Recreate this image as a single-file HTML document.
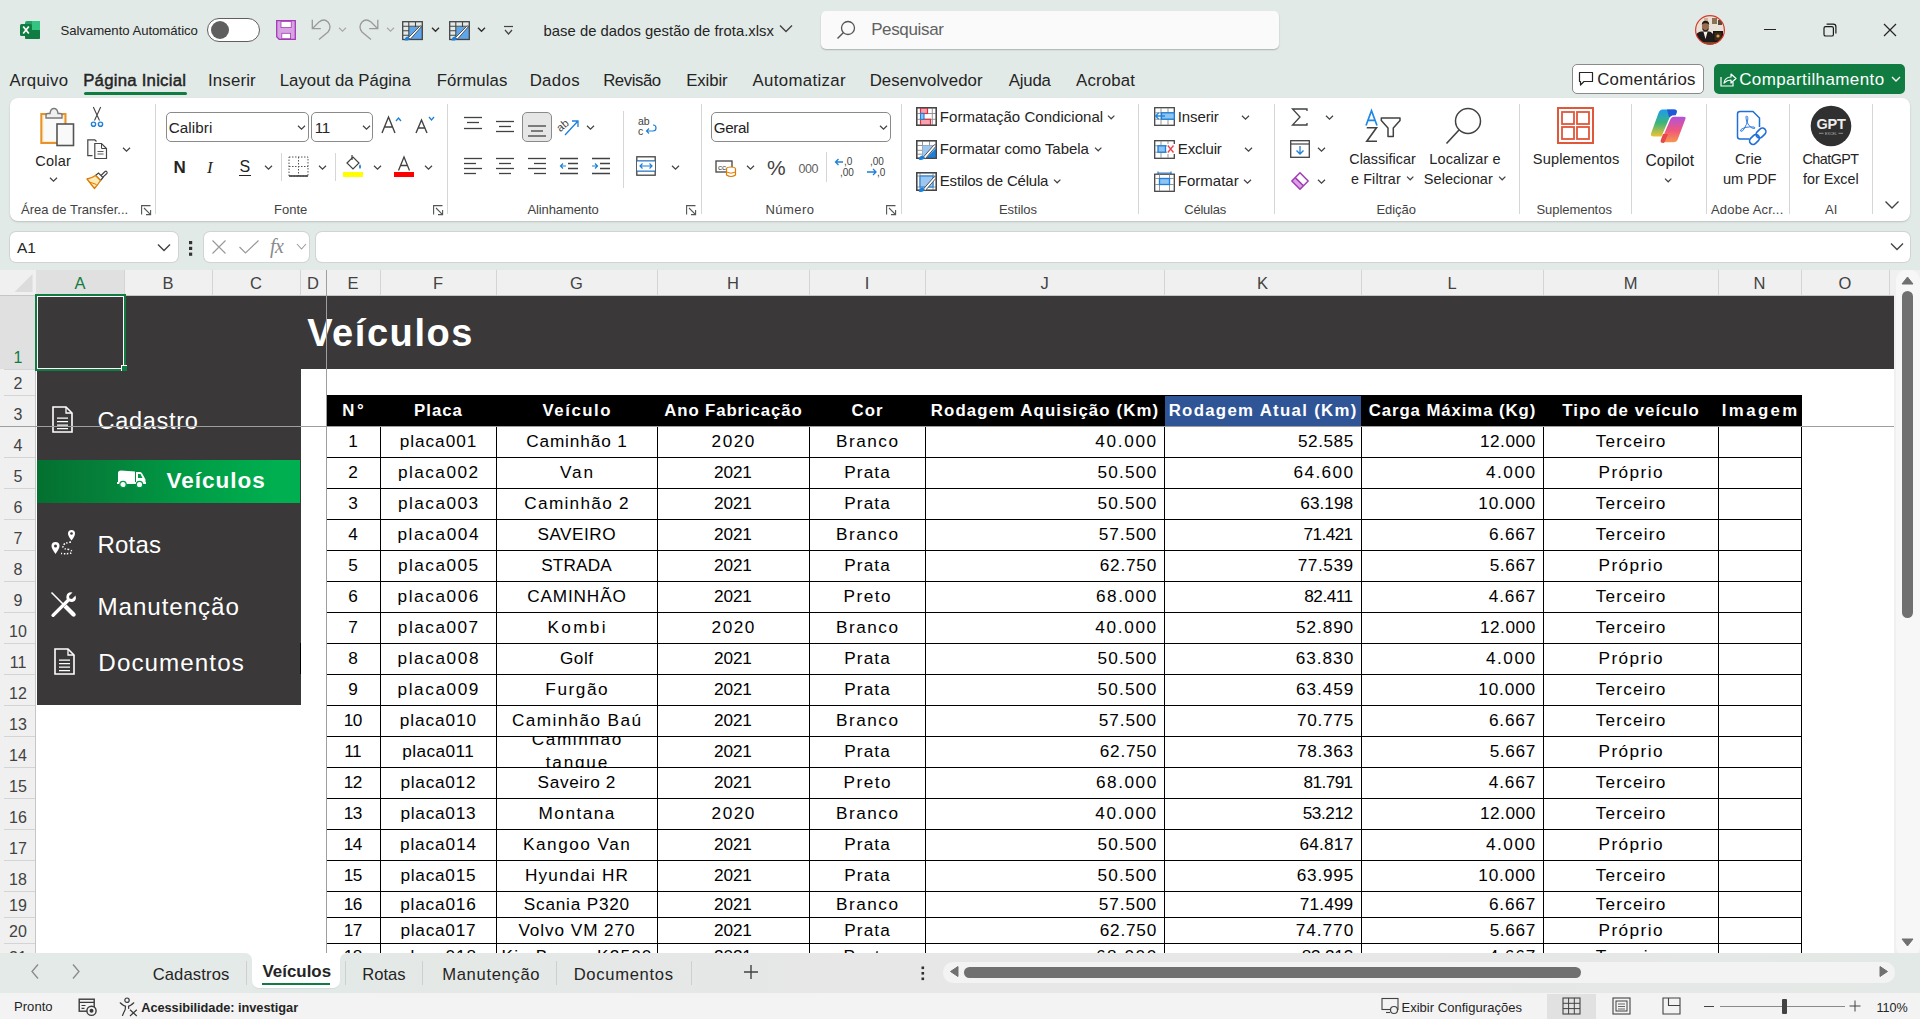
<!DOCTYPE html>
<html><head><meta charset="utf-8"><title>Excel</title>
<style>
html,body{margin:0;padding:0;}
body{width:1920px;height:1019px;position:relative;overflow:hidden;background:#E2EAE7;font-family:"Liberation Sans",sans-serif;}
.t{position:absolute;white-space:nowrap;line-height:1;}
.r{position:absolute;}
svg.r{overflow:visible;}
</style></head><body>
<svg class="r" style="left:20px;top:20px;" width="20" height="20" viewBox="0 0 20 20"><rect x="5" y="1" width="15" height="18" rx="2" fill="#21A366"/><rect x="5" y="10" width="15" height="9" rx="1" fill="#107C41"/><rect x="12" y="1" width="8" height="9" fill="#33C481"/><rect x="0" y="4" width="12" height="12" rx="1.5" fill="#107C41"/><path d="M3.2 6.5 L8.8 13.5 M8.8 6.5 L3.2 13.5" stroke="#fff" stroke-width="1.7"/></svg>
<div class="t" style="top:24.00px;font-size:13.2px;font-weight:400;color:#242424;letter-spacing:-0.052px;left:60.41px;">Salvamento Automático</div>
<div class="r" style="left:207px;top:17.5px;width:53px;height:24px;background:#fff;border:1px solid #5f5f5f;border-radius:12px;box-sizing:border-box;"></div>
<div class="r" style="left:211px;top:21px;width:18px;height:18px;background:#5f5f5f;border-radius:50%;"></div>
<svg class="r" style="left:276px;top:20px;" width="20" height="20" viewBox="0 0 20 20"><path d="M0.7 0.7 H19.3 V19.3 H3.2 L0.7 16.8 Z" fill="#D7A3E2" stroke="#A43AB6" stroke-width="1.3"/><rect x="5" y="1.4" width="10.2" height="6.2" fill="#fff" stroke="#A43AB6" stroke-width="0.8"/><rect x="5.8" y="13.3" width="8.8" height="5.4" fill="#fff" stroke="#A43AB6" stroke-width="0.8"/></svg>
<svg class="r" style="left:311px;top:19px;" width="22" height="22" viewBox="0 0 22 22"><path d="M1.3 0.8 V9.7 H9.8" fill="none" stroke="#9a9a9a" stroke-width="1.3"/><path d="M1.5 9.5 L8 3 Q13 -1 17 3 Q21 8 17 13 L8 20.5" fill="none" stroke="#9a9a9a" stroke-width="1.3"/></svg>
<svg class="r" style="left:337.5px;top:25.5px;" width="9.0" height="7.0" viewBox="0 0 9.0 7.0"><path d="M1 1.75 L4.5 5.25 L8.0 1.75" fill="none" stroke="#a8a8a8" stroke-width="1.1"/></svg>
<svg class="r" style="left:358px;top:19px;" width="22" height="22" viewBox="0 0 22 22"><path d="M19.8 0.8 V9.7 H11.2" fill="none" stroke="#9a9a9a" stroke-width="1.3"/><path d="M19.5 9.5 L13 3 Q8 -1 4 3 Q0 8 4 13 L13 20.5" fill="none" stroke="#9a9a9a" stroke-width="1.3"/></svg>
<svg class="r" style="left:385.5px;top:25.5px;" width="9.0" height="7.0" viewBox="0 0 9.0 7.0"><path d="M1 1.75 L4.5 5.25 L8.0 1.75" fill="none" stroke="#a8a8a8" stroke-width="1.1"/></svg>
<svg class="r" style="left:402px;top:21px;" width="21" height="20" viewBox="0 0 21 20"><rect x="7" y="6" width="13" height="12.5" fill="#5FA5EA"/><rect x="0.7" y="0.7" width="19.6" height="17.8" fill="none" stroke="#454545" stroke-width="1.3"/><path d="M1 5.3 H7 M1 9.8 H7 M1 14.3 H7 M7 5.3 H20 M6.8 1 V18.5 M13.5 1 V6" stroke="#454545" stroke-width="1.1"/><path d="M6 17 L17.5 5.5 Q19 4.5 19.6 5.5 L8.5 18 Z" fill="#fff" stroke="#454545" stroke-width="0.9"/><path d="M2.5 19.5 Q3 15.5 6 15.5 L8 17.5 Q7.5 20 2.5 19.5Z" fill="#1E7FD8"/></svg>
<svg class="r" style="left:430.5px;top:25.5px;" width="9.0" height="7.0" viewBox="0 0 9.0 7.0"><path d="M1 1.75 L4.5 5.25 L8.0 1.75" fill="none" stroke="#303030" stroke-width="1.4"/></svg>
<svg class="r" style="left:449px;top:21px;" width="21" height="20" viewBox="0 0 21 20"><rect x="7" y="6" width="13" height="12.5" fill="#5FA5EA"/><rect x="0.7" y="0.7" width="19.6" height="17.8" fill="none" stroke="#454545" stroke-width="1.3"/><path d="M1 5.3 H7 M1 9.8 H7 M1 14.3 H7 M7 5.3 H20 M6.8 1 V18.5 M13.5 1 V6" stroke="#454545" stroke-width="1.1"/><path d="M6 17 L17.5 5.5 Q19 4.5 19.6 5.5 L8.5 18 Z" fill="#fff" stroke="#454545" stroke-width="0.9"/><path d="M2.5 19.5 Q3 15.5 6 15.5 L8 17.5 Q7.5 20 2.5 19.5Z" fill="#1E7FD8"/></svg>
<svg class="r" style="left:476.5px;top:25.5px;" width="9.0" height="7.0" viewBox="0 0 9.0 7.0"><path d="M1 1.75 L4.5 5.25 L8.0 1.75" fill="none" stroke="#303030" stroke-width="1.4"/></svg>
<svg class="r" style="left:503px;top:25px;" width="11" height="11" viewBox="0 0 11 11"><path d="M1 1.5 H10" stroke="#424242" stroke-width="1.2"/><path d="M2 5 L5.5 9 L9 5" fill="none" stroke="#424242" stroke-width="1.2"/></svg>
<div class="t" style="top:24.00px;font-size:14.8px;font-weight:400;color:#242424;letter-spacing:0.021px;left:543.61px;">base de dados gestão de frota.xlsx</div>
<svg class="r" style="left:779px;top:24px;" width="14" height="9" viewBox="0 0 14 9"><path d="M1 1.5 L7 7.5 L13 1.5" fill="none" stroke="#424242" stroke-width="1.4"/></svg>
<div class="r" style="left:821px;top:11px;width:458px;height:38px;background:#FAFAFA;border-radius:5px;box-shadow:0 1px 1.5px rgba(0,0,0,0.25);"></div>
<svg class="r" style="left:836px;top:20px;" width="20" height="20" viewBox="0 0 20 20"><circle cx="12" cy="8" r="6.5" fill="none" stroke="#555" stroke-width="1.3"/><path d="M7.5 12.5 L1.5 18.5" stroke="#555" stroke-width="1.4"/></svg>
<div class="t" style="top:20.98px;font-size:17px;font-weight:400;color:#616161;letter-spacing:-0.354px;left:871.14px;">Pesquisar</div>
<svg class="r" style="left:1695px;top:15px;" width="30" height="30" viewBox="0 0 30 30"><defs><clipPath id="av"><circle cx="15" cy="15" r="14.5"/></clipPath></defs><g clip-path="url(#av)"><rect width="30" height="30" fill="#E9E2D8"/><rect x="17" y="3" width="5" height="6" fill="#8B7355"/><rect x="23" y="5" width="4" height="5" fill="#5a4a3a"/><rect x="9" y="3" width="4" height="4" fill="#c9b79c"/><path d="M0 30 V21 Q2 17 6 16.5 H14 Q18 17 19 22 V30 Z" fill="#1E1B1A"/><path d="M8.5 17 L10.5 24 L12.5 17 Z" fill="#F4F1EC"/><ellipse cx="10.5" cy="11.5" rx="3.6" ry="4.6" fill="#9A6B4F"/><path d="M6.8 10 Q7 5.8 10.5 5.8 Q14.2 5.8 14.2 10 Q13 8 10.5 8.3 Q8 8 6.8 10Z" fill="#231A15"/><path d="M7.5 13 Q10.5 17.5 13.5 13 L13.5 15 Q10.5 18 7.5 15Z" fill="#2a1f1a"/><rect x="18" y="16" width="10" height="12" fill="#1a1614"/><rect x="19.5" y="17.5" width="7" height="8" fill="#3b2a1a"/><circle cx="23" cy="21" r="1.6" fill="#D9A441"/><rect x="0" y="27" width="30" height="3" fill="#6b4a2a"/></g><circle cx="15" cy="15" r="14.4" fill="none" stroke="#D93A2B" stroke-width="1.2"/></svg>
<div class="r" style="left:1764px;top:29px;width:12px;height:1.2px;background:#242424;"></div>
<svg class="r" style="left:1823px;top:23px;" width="14" height="14" viewBox="0 0 14 14"><rect x="1" y="3.6" width="9.4" height="9.4" rx="1.6" fill="none" stroke="#1a1a1a" stroke-width="1.2"/><path d="M3.6 1.1 H10.3 Q12.9 1.1 12.9 3.7 V10.4" fill="none" stroke="#1a1a1a" stroke-width="1.2"/></svg>
<svg class="r" style="left:1883px;top:23px;" width="14" height="14" viewBox="0 0 14 14"><path d="M1 1 L13 13 M13 1 L1 13" stroke="#242424" stroke-width="1.2"/></svg>
<div class="t" style="top:73.00px;font-size:16.8px;font-weight:400;color:#242424;letter-spacing:0.287px;left:9.50px;">Arquivo</div>
<div class="t" style="top:73.00px;font-size:16.8px;font-weight:400;color:#242424;letter-spacing:0.229px;left:83.16px;-webkit-text-stroke:0.45px #242424;">Página Inicial</div>
<div class="t" style="top:73.00px;font-size:16.8px;font-weight:400;color:#242424;letter-spacing:0.177px;left:207.99px;">Inserir</div>
<div class="t" style="top:73.00px;font-size:16.8px;font-weight:400;color:#242424;letter-spacing:0.031px;left:279.66px;">Layout da Página</div>
<div class="t" style="top:73.00px;font-size:16.8px;font-weight:400;color:#242424;letter-spacing:0.125px;left:436.66px;">Fórmulas</div>
<div class="t" style="top:73.00px;font-size:16.8px;font-weight:400;color:#242424;letter-spacing:0.345px;left:529.66px;">Dados</div>
<div class="t" style="top:73.00px;font-size:16.8px;font-weight:400;color:#242424;letter-spacing:-0.439px;left:603.16px;">Revisão</div>
<div class="t" style="top:73.00px;font-size:16.8px;font-weight:400;color:#242424;letter-spacing:-0.098px;left:686.16px;">Exibir</div>
<div class="t" style="top:73.00px;font-size:16.8px;font-weight:400;color:#242424;letter-spacing:0.354px;left:752.50px;">Automatizar</div>
<div class="t" style="top:73.00px;font-size:16.8px;font-weight:400;color:#242424;letter-spacing:0.08px;left:869.66px;">Desenvolvedor</div>
<div class="t" style="top:73.00px;font-size:16.8px;font-weight:400;color:#242424;letter-spacing:-0.19px;left:1008.75px;">Ajuda</div>
<div class="t" style="top:73.00px;font-size:16.8px;font-weight:400;color:#242424;letter-spacing:0.187px;left:1076.00px;">Acrobat</div>
<div class="r" style="left:84px;top:92px;width:103px;height:3px;background:#107C41;border-radius:2px;"></div>
<div class="r" style="left:1572px;top:64px;width:132px;height:30px;background:#fff;border:1px solid #8a8a8a;border-radius:5px;box-sizing:border-box;"></div>
<svg class="r" style="left:1578px;top:71px;" width="16" height="16" viewBox="0 0 16 16"><path d="M1.5 1.5 H14.5 V10.5 H6 L2.5 14 V10.5 H1.5 Z" fill="none" stroke="#242424" stroke-width="1.2" stroke-linejoin="round"/></svg>
<div class="t" style="top:72.00px;font-size:16.8px;font-weight:400;color:#242424;letter-spacing:0.317px;left:1597.16px;">Comentários</div>
<div class="r" style="left:1714px;top:64px;width:191px;height:30px;background:#107C41;border-radius:5px;"></div>
<svg class="r" style="left:1719px;top:70px;" width="18" height="18" viewBox="0 0 18 18"><path d="M2 7 V16 H14 V12" fill="none" stroke="#fff" stroke-width="1.2"/><path d="M5 13 Q6 7 12 7 V4 L17 8.5 L12 13 V10 Q8 10 5 13Z" fill="none" stroke="#fff" stroke-width="1.2" stroke-linejoin="round"/></svg>
<div class="t" style="top:70.98px;font-size:17px;font-weight:400;color:#fff;letter-spacing:0.409px;left:1739.15px;">Compartilhamento</div>
<svg class="r" style="left:1891px;top:76px;" width="10" height="7" viewBox="0 0 10 7"><path d="M1 1 L5 5 L9 1" fill="none" stroke="#fff" stroke-width="1.3"/></svg>
<div class="r" style="left:10px;top:98px;width:1900px;height:123px;background:#fff;border-radius:8px;box-shadow:0 1px 2px rgba(0,0,0,0.18);"></div>
<svg class="r" style="left:38px;top:106px;" width="38" height="41" viewBox="0 0 38 41"><rect x="3.3" y="8" width="24.2" height="29" fill="#FDEBB8" stroke="#E8912D" stroke-width="2"/><rect x="5.5" y="10" width="20" height="25" fill="#FAFAFA"/><path d="M8 12 V9 Q8 7.5 10 7.5 H12 Q12.5 2.5 16 2.5 Q19.5 2.5 20 7.5 H22 Q24 7.5 24 9 V12 Z" fill="#F0F0F0" stroke="#7a7a7a" stroke-width="1.4"/><rect x="19" y="18" width="16.5" height="21.5" fill="#F9F9F9" stroke="#555" stroke-width="1.6"/></svg>
<div class="t" style="top:154.00px;font-size:14.5px;font-weight:400;color:#242424;letter-spacing:0.247px;left:35.27px;">Colar</div>
<svg class="r" style="left:48.5px;top:175.5px;" width="9.0" height="7.0" viewBox="0 0 9.0 7.0"><path d="M1 1.75 L4.5 5.25 L8.0 1.75" fill="none" stroke="#424242" stroke-width="1.2"/></svg>
<svg class="r" style="left:89px;top:106px;" width="16" height="21" viewBox="0 0 16 21"><path d="M4.3 1 L10.5 14.5 M11.7 1 L5.5 14.5" stroke="#424242" stroke-width="1.1"/><circle cx="4.5" cy="18.2" r="2.1" fill="none" stroke="#1E7FD8" stroke-width="1.4"/><circle cx="11.5" cy="18.2" r="2.1" fill="none" stroke="#1E7FD8" stroke-width="1.4"/></svg>
<svg class="r" style="left:86px;top:138px;" width="22" height="22" viewBox="0 0 22 22"><path d="M6.5 17.7 H1.8 V1.8 H8.8 L10.5 3.5" fill="#FAFAFA" stroke="#454545" stroke-width="1.2"/><path d="M8.8 5.5 H15.5 L20.5 10.5 V20.5 H8.8 Z" fill="#FAFAFA" stroke="#454545" stroke-width="1.2"/><path d="M15.5 5.5 V10.5 H20.5" fill="none" stroke="#454545" stroke-width="1"/><path d="M11.5 13.5 H17.5 M11.5 16 H17.5" stroke="#454545" stroke-width="0.9"/></svg>
<svg class="r" style="left:121.5px;top:145.5px;" width="9.0" height="7.0" viewBox="0 0 9.0 7.0"><path d="M1 1.75 L4.5 5.25 L8.0 1.75" fill="none" stroke="#424242" stroke-width="1.2"/></svg>
<svg class="r" style="left:86px;top:170px;" width="22" height="21" viewBox="0 0 22 21"><path d="M13 7.5 L19 1.5 Q20 0.8 20.8 1.6 L21 2 Q21.5 2.8 20.8 3.5 L14.5 9.5 Z" fill="#fff" stroke="#424242" stroke-width="1.1"/><path d="M9.5 5.5 L12.5 3 L17 7.5 L14.5 10.5 Z" fill="#fff" stroke="#424242" stroke-width="1.2"/><path d="M9.5 5.5 Q5 8.5 1 9 L8.5 18.5 Q12 14.5 14.5 10.5 Z" fill="#FDEBB8" stroke="#E07B00" stroke-width="1.3" stroke-linejoin="round"/><path d="M3.5 12 L10.5 14.5" stroke="#E07B00" stroke-width="1"/></svg>
<div class="t" style="top:203.02px;font-size:13px;font-weight:400;color:#424242;letter-spacing:0.01px;left:21.00px;">Área de Transfer...</div>
<svg class="r" style="left:141px;top:205px;" width="11" height="11" viewBox="0 0 11 11"><path d="M0.6 9.5 V0.6 H9.5" fill="none" stroke="#555" stroke-width="1.1"/><path d="M3 3 L9.6 9.6 M9.6 5 V9.6 H5" fill="none" stroke="#555" stroke-width="1.1"/></svg>
<div class="r" style="left:155px;top:104px;width:1px;height:110px;background:#D6D6D6;"></div>
<div class="r" style="left:166px;top:112px;width:143px;height:30px;background:#fff;border:1px solid #8a8a8a;border-radius:5px;box-sizing:border-box;"></div>
<div class="t" style="top:120.01px;font-size:15.2px;font-weight:400;color:#242424;letter-spacing:0.122px;left:168.64px;">Calibri</div>
<svg class="r" style="left:296.5px;top:123.5px;" width="9.0" height="7.0" viewBox="0 0 9.0 7.0"><path d="M1 1.75 L4.5 5.25 L8.0 1.75" fill="none" stroke="#424242" stroke-width="1.2"/></svg>
<div class="r" style="left:311px;top:112px;width:62px;height:30px;background:#fff;border:1px solid #8a8a8a;border-radius:5px;box-sizing:border-box;"></div>
<div class="t" style="top:120.01px;font-size:15.2px;font-weight:400;color:#242424;letter-spacing:-0.3px;left:314.80px;">11</div>
<svg class="r" style="left:361.5px;top:123.5px;" width="9.0" height="7.0" viewBox="0 0 9.0 7.0"><path d="M1 1.75 L4.5 5.25 L8.0 1.75" fill="none" stroke="#424242" stroke-width="1.2"/></svg>
<svg class="r" style="left:381px;top:115px;" width="22" height="19" viewBox="0 0 22 19"><path d="M1 18 L7.5 2 L14 18 M3.5 12 H11.5" fill="none" stroke="#424242" stroke-width="1.4"/><path d="M15 6 L17.5 3 L20 6" fill="none" stroke="#1E7FD8" stroke-width="1.3"/></svg>
<svg class="r" style="left:415px;top:115px;" width="20" height="19" viewBox="0 0 20 19"><path d="M1 18 L6.5 5 L12 18 M3 13 H10" fill="none" stroke="#424242" stroke-width="1.4"/><path d="M14 2 L16.5 5 L19 2" fill="none" stroke="#1E7FD8" stroke-width="1.3"/></svg>
<div class="t" style="top:158.98px;font-size:17px;font-weight:700;color:#242424;left:173.50px;">N</div>
<div class="t" style="top:158.98px;font-size:17px;font-weight:400;color:#242424;left:207.00px;font-family:'Liberation Serif',serif;font-style:italic;">I</div>
<div class="t" style="top:158.98px;font-size:16px;font-weight:400;color:#242424;left:239.50px;">S</div>
<div class="r" style="left:239px;top:175px;width:12px;height:1.2px;background:#242424;"></div>
<svg class="r" style="left:263.5px;top:163.5px;" width="9.0" height="7.0" viewBox="0 0 9.0 7.0"><path d="M1 1.75 L4.5 5.25 L8.0 1.75" fill="none" stroke="#424242" stroke-width="1.2"/></svg>
<div class="r" style="left:281px;top:153px;width:1px;height:28px;background:#D6D6D6;"></div>
<svg class="r" style="left:288px;top:156px;" width="21" height="21" viewBox="0 0 21 21"><rect x="1" y="1" width="19" height="19" fill="none" stroke="#555" stroke-width="1" stroke-dasharray="1.5 1.5"/><path d="M10.5 1 V20 M1 10.5 H20" stroke="#555" stroke-width="1" stroke-dasharray="1.5 1.5"/><path d="M1 20 H20" stroke="#424242" stroke-width="1.6"/></svg>
<svg class="r" style="left:317.5px;top:163.5px;" width="9.0" height="7.0" viewBox="0 0 9.0 7.0"><path d="M1 1.75 L4.5 5.25 L8.0 1.75" fill="none" stroke="#424242" stroke-width="1.2"/></svg>
<div class="r" style="left:335px;top:153px;width:1px;height:28px;background:#D6D6D6;"></div>
<svg class="r" style="left:343px;top:154px;" width="21" height="18" viewBox="0 0 21 18"><path d="M4 9 L10 3 L16 9 L10 15 Z" fill="#fff" stroke="#424242" stroke-width="1.2"/><path d="M9 1 V6" stroke="#424242" stroke-width="1.2"/><path d="M17 10 Q19 13 17 15 Q15 13 17 10Z" fill="#1E7FD8"/></svg>
<div class="r" style="left:343px;top:172px;width:20px;height:5px;background:#FFFF00;"></div>
<svg class="r" style="left:372.5px;top:163.5px;" width="9.0" height="7.0" viewBox="0 0 9.0 7.0"><path d="M1 1.75 L4.5 5.25 L8.0 1.75" fill="none" stroke="#424242" stroke-width="1.2"/></svg>
<svg class="r" style="left:394px;top:154px;" width="20" height="18" viewBox="0 0 20 18"><path d="M4.5 16.5 L10 3 L15.5 16.5 M6.5 11.5 H13.5" fill="none" stroke="#424242" stroke-width="1.3"/></svg>
<div class="r" style="left:394px;top:172px;width:20px;height:5px;background:#FF0000;"></div>
<svg class="r" style="left:423.5px;top:163.5px;" width="9.0" height="7.0" viewBox="0 0 9.0 7.0"><path d="M1 1.75 L4.5 5.25 L8.0 1.75" fill="none" stroke="#424242" stroke-width="1.2"/></svg>
<div class="t" style="top:203.02px;font-size:13px;font-weight:400;color:#424242;letter-spacing:0.011px;left:273.96px;">Fonte</div>
<svg class="r" style="left:433px;top:205px;" width="11" height="11" viewBox="0 0 11 11"><path d="M0.6 9.5 V0.6 H9.5" fill="none" stroke="#555" stroke-width="1.1"/><path d="M3 3 L9.6 9.6 M9.6 5 V9.6 H5" fill="none" stroke="#555" stroke-width="1.1"/></svg>
<div class="r" style="left:447px;top:104px;width:1px;height:110px;background:#D6D6D6;"></div>
<svg class="r" style="left:463px;top:116px;" width="20" height="18" viewBox="0 0 20 18"><path d="M1 1.5 H19" stroke="#424242" stroke-width="1.3"/><path d="M4 6.5 H16" stroke="#424242" stroke-width="1.3"/><path d="M1 12.5 H19" stroke="#424242" stroke-width="1.3"/></svg>
<svg class="r" style="left:495px;top:119px;" width="20" height="18" viewBox="0 0 20 18"><path d="M1 2.5 H19" stroke="#424242" stroke-width="1.3"/><path d="M4 7.5 H16" stroke="#424242" stroke-width="1.3"/><path d="M1 12.5 H19" stroke="#424242" stroke-width="1.3"/></svg>
<div class="r" style="left:522px;top:112px;width:30px;height:30px;background:#E6E6E6;border:1px solid #8a8a8a;border-radius:5px;box-sizing:border-box;"></div>
<svg class="r" style="left:527px;top:123px;" width="20" height="18" viewBox="0 0 20 18"><path d="M1 3 H19" stroke="#424242" stroke-width="1.3"/><path d="M4 8 H16" stroke="#424242" stroke-width="1.3"/><path d="M1 13 H19" stroke="#424242" stroke-width="1.3"/></svg>
<svg class="r" style="left:557px;top:116px;" width="24" height="21" viewBox="0 0 24 21"><text x="0" y="13" font-family="Liberation Sans" font-size="11" fill="#424242" transform="rotate(-40 6 10)">ab</text><path d="M8 19 L21 5 M15 5 H21 V11" fill="none" stroke="#1E7FD8" stroke-width="1.3"/></svg>
<svg class="r" style="left:585.5px;top:123.5px;" width="9.0" height="7.0" viewBox="0 0 9.0 7.0"><path d="M1 1.75 L4.5 5.25 L8.0 1.75" fill="none" stroke="#424242" stroke-width="1.2"/></svg>
<svg class="r" style="left:463px;top:157px;" width="20" height="18" viewBox="0 0 20 18"><path d="M1 1.5 H19" stroke="#424242" stroke-width="1.3"/><path d="M1 6.5 H13" stroke="#424242" stroke-width="1.3"/><path d="M1 11.5 H19" stroke="#424242" stroke-width="1.3"/><path d="M1 16.5 H13" stroke="#424242" stroke-width="1.3"/></svg>
<svg class="r" style="left:495px;top:157px;" width="20" height="18" viewBox="0 0 20 18"><path d="M1 1.5 H19" stroke="#424242" stroke-width="1.3"/><path d="M4 6.5 H16" stroke="#424242" stroke-width="1.3"/><path d="M1 11.5 H19" stroke="#424242" stroke-width="1.3"/><path d="M4 16.5 H16" stroke="#424242" stroke-width="1.3"/></svg>
<svg class="r" style="left:527px;top:157px;" width="20" height="18" viewBox="0 0 20 18"><path d="M1 1.5 H19" stroke="#424242" stroke-width="1.3"/><path d="M7 6.5 H19" stroke="#424242" stroke-width="1.3"/><path d="M1 11.5 H19" stroke="#424242" stroke-width="1.3"/><path d="M7 16.5 H19" stroke="#424242" stroke-width="1.3"/></svg>
<svg class="r" style="left:559px;top:157px;" width="20" height="18" viewBox="0 0 20 18"><path d="M1 1.5 H19 M9 6.5 H19 M9 11.5 H19 M1 16.5 H19" stroke="#424242" stroke-width="1.3"/><path d="M7 9 H1.5 M4 6.5 L1.5 9 L4 11.5" fill="none" stroke="#1E7FD8" stroke-width="1.2"/></svg>
<svg class="r" style="left:591px;top:157px;" width="20" height="18" viewBox="0 0 20 18"><path d="M1 1.5 H19 M9 6.5 H19 M9 11.5 H19 M1 16.5 H19" stroke="#424242" stroke-width="1.3"/><path d="M1 9 H6.5 M4 6.5 L6.5 9 L4 11.5" fill="none" stroke="#1E7FD8" stroke-width="1.2"/></svg>
<div class="r" style="left:623px;top:111px;width:1px;height:77px;background:#D6D6D6;"></div>
<svg class="r" style="left:637px;top:116px;" width="21" height="22" viewBox="0 0 21 22"><text x="1" y="9" font-family="Liberation Sans" font-size="10.5" fill="#424242">ab</text><text x="1" y="19" font-family="Liberation Sans" font-size="10.5" fill="#424242">c</text><path d="M10 15 H16 Q19 15 19 12 Q19 9 16 9 M12 12.5 L9.5 15 L12 17.5" fill="none" stroke="#1E7FD8" stroke-width="1.2"/></svg>
<svg class="r" style="left:636px;top:156px;" width="20" height="20" viewBox="0 0 20 20"><rect x="0.8" y="0.8" width="18.4" height="18.4" fill="none" stroke="#424242" stroke-width="1.3"/><path d="M1 5 H19 M1 15 H19" stroke="#424242" stroke-width="1"/><rect x="1" y="5" width="18" height="10" fill="#fff"/><path d="M1 5 H19 M1 15 H19" stroke="#1E7FD8" stroke-width="1.2"/><path d="M4 10 H16 M6.5 7.5 L4 10 L6.5 12.5 M13.5 7.5 L16 10 L13.5 12.5" fill="none" stroke="#1E7FD8" stroke-width="1.2"/></svg>
<svg class="r" style="left:670.5px;top:163.5px;" width="9.0" height="7.0" viewBox="0 0 9.0 7.0"><path d="M1 1.75 L4.5 5.25 L8.0 1.75" fill="none" stroke="#424242" stroke-width="1.2"/></svg>
<div class="t" style="top:203.02px;font-size:13px;font-weight:400;color:#424242;letter-spacing:-0.116px;left:527.50px;">Alinhamento</div>
<svg class="r" style="left:686px;top:205px;" width="11" height="11" viewBox="0 0 11 11"><path d="M0.6 9.5 V0.6 H9.5" fill="none" stroke="#555" stroke-width="1.1"/><path d="M3 3 L9.6 9.6 M9.6 5 V9.6 H5" fill="none" stroke="#555" stroke-width="1.1"/></svg>
<div class="r" style="left:701px;top:104px;width:1px;height:110px;background:#D6D6D6;"></div>
<div class="r" style="left:711px;top:112px;width:180px;height:30px;background:#fff;border:1px solid #8a8a8a;border-radius:5px;box-sizing:border-box;"></div>
<div class="t" style="top:120.01px;font-size:15.2px;font-weight:400;color:#242424;letter-spacing:-0.373px;left:713.74px;">Geral</div>
<svg class="r" style="left:878.5px;top:123.5px;" width="9.0" height="7.0" viewBox="0 0 9.0 7.0"><path d="M1 1.75 L4.5 5.25 L8.0 1.75" fill="none" stroke="#424242" stroke-width="1.2"/></svg>
<svg class="r" style="left:715px;top:159px;" width="22" height="19" viewBox="0 0 22 19"><rect x="1" y="2" width="16" height="11" fill="none" stroke="#424242" stroke-width="1.3"/><text x="3" y="11" font-family="Liberation Sans" font-size="8" fill="#424242">cc</text><ellipse cx="16" cy="10" rx="4.5" ry="2" fill="#fff" stroke="#E07B00" stroke-width="1.2"/><path d="M11.5 10 V16 Q16 19 20.5 16 V10" fill="#fff" stroke="#E07B00" stroke-width="1.2"/><path d="M11.5 13 Q16 15.5 20.5 13" fill="none" stroke="#E07B00" stroke-width="1"/></svg>
<svg class="r" style="left:745.5px;top:163.5px;" width="9.0" height="7.0" viewBox="0 0 9.0 7.0"><path d="M1 1.75 L4.5 5.25 L8.0 1.75" fill="none" stroke="#424242" stroke-width="1.2"/></svg>
<div class="t" style="top:157.00px;font-size:21px;font-weight:400;color:#424242;left:767.00px;">%</div>
<div class="t" style="top:162.99px;font-size:12.5px;font-weight:400;color:#616161;letter-spacing:-0.5px;left:798.50px;">000</div>
<div class="r" style="left:826px;top:152px;width:1px;height:30px;background:#D6D6D6;"></div>
<svg class="r" style="left:834px;top:156px;" width="20" height="21" viewBox="0 0 20 21"><path d="M9 6 H1.5 M4.5 3 L1.5 6 L4.5 9" fill="none" stroke="#1E7FD8" stroke-width="1.3"/><text x="10" y="9" font-family="Liberation Sans" font-size="10" fill="#424242">,0</text><text x="6" y="20" font-family="Liberation Sans" font-size="10" fill="#424242">,00</text></svg>
<svg class="r" style="left:866px;top:156px;" width="20" height="21" viewBox="0 0 20 21"><text x="4" y="9" font-family="Liberation Sans" font-size="10" fill="#424242">,00</text><path d="M1 16 H10 M7 13 L10 16 L7 19" fill="none" stroke="#1E7FD8" stroke-width="1.3"/><text x="11" y="20" font-family="Liberation Sans" font-size="10" fill="#424242">,0</text></svg>
<div class="t" style="top:203.02px;font-size:13px;font-weight:400;color:#424242;letter-spacing:0.469px;left:765.46px;">Número</div>
<svg class="r" style="left:886px;top:205px;" width="11" height="11" viewBox="0 0 11 11"><path d="M0.6 9.5 V0.6 H9.5" fill="none" stroke="#555" stroke-width="1.1"/><path d="M3 3 L9.6 9.6 M9.6 5 V9.6 H5" fill="none" stroke="#555" stroke-width="1.1"/></svg>
<div class="r" style="left:901px;top:104px;width:1px;height:110px;background:#D6D6D6;"></div>
<svg class="r" style="left:916px;top:107px;" width="21" height="19" viewBox="0 0 21 19"><rect x="0.7" y="0.7" width="19.6" height="17.6" fill="#fff" stroke="#454545" stroke-width="1.3"/><path d="M1 6.5 H20 M1 12.3 H20 M4.5 1 V18 M16.3 1 V18" stroke="#8a8a8a" stroke-width="0.9"/><rect x="4.5" y="1" width="7" height="5.5" fill="#F5A3AE" stroke="#E0313F" stroke-width="1.2"/><rect x="4.5" y="12.3" width="10" height="5.7" fill="#F5A3AE" stroke="#E0313F" stroke-width="1.2"/><rect x="4.5" y="6.5" width="3.5" height="5.8" fill="#8EC3F2" stroke="#1E7FD8" stroke-width="1.1"/><rect x="0.7" y="0.7" width="19.6" height="17.6" fill="none" stroke="#454545" stroke-width="1.3"/></svg>
<div class="t" style="top:108.98px;font-size:15px;font-weight:400;color:#242424;letter-spacing:0.037px;left:939.80px;">Formatação Condicional</div>
<svg class="r" style="left:1106.8px;top:113.8px;" width="8.4" height="6.4" viewBox="0 0 8.4 6.4"><path d="M1 1.6 L4.2 4.800000000000001 L7.4 1.6" fill="none" stroke="#424242" stroke-width="1.2"/></svg>
<svg class="r" style="left:916px;top:140px;" width="21" height="20" viewBox="0 0 21 20"><rect x="0.7" y="0.7" width="19.6" height="17.6" fill="#fff" stroke="#454545" stroke-width="1.3"/><path d="M1 5.5 H20 M1 10.3 H6 M1 14.2 H6 M6.5 1 V18 M13.5 1 V6" stroke="#8a8a8a" stroke-width="0.9"/><rect x="6.5" y="5.5" width="13.8" height="12.8" fill="#9DC6F0"/><path d="M20.3 8 V18.3 H10 Z" fill="#1E7FD8"/><rect x="0.7" y="0.7" width="19.6" height="17.6" fill="none" stroke="#454545" stroke-width="1.3"/><path d="M7 17.5 L17.8 5.2 Q19 4.2 19.8 5 Q20.4 5.8 19.5 6.8 L9.2 18.8 Z" fill="#fff" stroke="#454545" stroke-width="0.9"/><path d="M2.8 19.8 Q3 15.8 6.5 15.5 L8.8 17.5 Q8 20.5 2.8 19.8Z" fill="#1E7FD8"/></svg>
<div class="t" style="top:140.98px;font-size:15px;font-weight:400;color:#242424;letter-spacing:-0.034px;left:939.80px;">Formatar como Tabela</div>
<svg class="r" style="left:1093.8px;top:145.8px;" width="8.4" height="6.4" viewBox="0 0 8.4 6.4"><path d="M1 1.6 L4.2 4.800000000000001 L7.4 1.6" fill="none" stroke="#424242" stroke-width="1.2"/></svg>
<svg class="r" style="left:916px;top:172px;" width="21" height="20" viewBox="0 0 21 20"><rect x="0.7" y="0.7" width="19.6" height="17.6" fill="#fff" stroke="#454545" stroke-width="1.3"/><path d="M1 4 H20 M1 15 H20 M4 1 V18 M17 1 V18" stroke="#8a8a8a" stroke-width="0.9"/><rect x="4" y="4" width="13" height="11" fill="#9DC6F0" stroke="#1E7FD8" stroke-width="1.1"/><rect x="0.7" y="0.7" width="19.6" height="17.6" fill="none" stroke="#454545" stroke-width="1.3"/><path d="M7 17.5 L17.8 5.2 Q19 4.2 19.8 5 Q20.4 5.8 19.5 6.8 L9.2 18.8 Z" fill="#fff" stroke="#454545" stroke-width="0.9"/><path d="M2.8 19.8 Q3 15.8 6.5 15.5 L8.8 17.5 Q8 20.5 2.8 19.8Z" fill="#1E7FD8"/></svg>
<div class="t" style="top:172.98px;font-size:15px;font-weight:400;color:#242424;letter-spacing:-0.191px;left:939.80px;">Estilos de Célula</div>
<svg class="r" style="left:1052.8px;top:177.8px;" width="8.4" height="6.4" viewBox="0 0 8.4 6.4"><path d="M1 1.6 L4.2 4.800000000000001 L7.4 1.6" fill="none" stroke="#424242" stroke-width="1.2"/></svg>
<div class="t" style="top:203.02px;font-size:13px;font-weight:400;color:#424242;letter-spacing:-0.032px;left:998.96px;">Estilos</div>
<div class="r" style="left:1138px;top:104px;width:1px;height:110px;background:#D6D6D6;"></div>
<svg class="r" style="left:1154px;top:107px;" width="21" height="19" viewBox="0 0 21 19"><rect x="0.7" y="0.7" width="19.6" height="17.6" fill="#fff" stroke="#454545" stroke-width="1.3"/><path d="M1 5.8 H20 M1 12.2 H20 M7 1 V18 M14 1 V18" stroke="#8a8a8a" stroke-width="0.9"/><rect x="7.5" y="5.8" width="12.8" height="6.4" fill="#8EC3F2" stroke="#1E7FD8" stroke-width="1.3"/><path d="M11 9 H1.5 M4.8 5.7 L1.5 9 L4.8 12.3" fill="none" stroke="#1E88E5" stroke-width="1.3"/></svg>
<div class="t" style="top:108.98px;font-size:15px;font-weight:400;color:#242424;letter-spacing:-0.087px;left:1177.65px;">Inserir</div>
<svg class="r" style="left:1240.5px;top:113.5px;" width="9.0" height="7.0" viewBox="0 0 9.0 7.0"><path d="M1 1.75 L4.5 5.25 L8.0 1.75" fill="none" stroke="#424242" stroke-width="1.2"/></svg>
<svg class="r" style="left:1154px;top:140px;" width="21" height="19" viewBox="0 0 21 19"><rect x="0.7" y="0.7" width="19.6" height="17.6" fill="#fff" stroke="#454545" stroke-width="1.3"/><path d="M1 5.8 H20 M1 12.2 H20 M7 1 V18 M14 1 V18" stroke="#8a8a8a" stroke-width="0.9"/><rect x="4" y="5.8" width="7.5" height="6.4" fill="#8EC3F2" stroke="#1E7FD8" stroke-width="1.3"/><rect x="13" y="4" width="8" height="10" fill="#fff"/><path d="M13.8 5.5 L19.5 12.5 M19.5 5.5 L13.8 12.5" stroke="#E8434F" stroke-width="1.3"/></svg>
<div class="t" style="top:140.98px;font-size:15px;font-weight:400;color:#242424;letter-spacing:-0.158px;left:1177.80px;">Excluir</div>
<svg class="r" style="left:1243.5px;top:145.5px;" width="9.0" height="7.0" viewBox="0 0 9.0 7.0"><path d="M1 1.75 L4.5 5.25 L8.0 1.75" fill="none" stroke="#424242" stroke-width="1.2"/></svg>
<svg class="r" style="left:1154px;top:171px;" width="21" height="21" viewBox="0 0 21 21"><path d="M4 2 H17 M4 0.5 V3.5 M17 0.5 V3.5" stroke="#1E88E5" stroke-width="1.2"/><rect x="0.7" y="3.2" width="19.6" height="17.1" fill="#fff" stroke="#454545" stroke-width="1.3"/><path d="M1 7.5 H20 M1 13.5 H20 M5.5 3.5 V20 M15.5 3.5 V20" stroke="#8a8a8a" stroke-width="0.9"/><rect x="5.5" y="7.5" width="10" height="6" fill="#8EC3F2" stroke="#1E7FD8" stroke-width="1.3"/></svg>
<div class="t" style="top:172.98px;font-size:15px;font-weight:400;color:#242424;letter-spacing:0.004px;left:1177.80px;">Formatar</div>
<svg class="r" style="left:1242.5px;top:177.5px;" width="9.0" height="7.0" viewBox="0 0 9.0 7.0"><path d="M1 1.75 L4.5 5.25 L8.0 1.75" fill="none" stroke="#424242" stroke-width="1.2"/></svg>
<div class="t" style="top:203.02px;font-size:13px;font-weight:400;color:#424242;letter-spacing:-0.242px;left:1184.35px;">Células</div>
<div class="r" style="left:1274px;top:104px;width:1px;height:110px;background:#D6D6D6;"></div>
<svg class="r" style="left:1291px;top:108px;" width="18" height="18" viewBox="0 0 18 18"><path d="M16 3 V1 H1.5 L9 9 L1.5 17 H16 V15" fill="none" stroke="#424242" stroke-width="1.3"/></svg>
<svg class="r" style="left:1324.5px;top:113.5px;" width="9.0" height="7.0" viewBox="0 0 9.0 7.0"><path d="M1 1.75 L4.5 5.25 L8.0 1.75" fill="none" stroke="#424242" stroke-width="1.2"/></svg>
<svg class="r" style="left:1290px;top:140px;" width="20" height="18" viewBox="0 0 20 18"><rect x="0.7" y="0.7" width="18.6" height="16.6" fill="none" stroke="#424242" stroke-width="1.3"/><path d="M1 4 H19" stroke="#424242" stroke-width="1.2"/><path d="M10 6 V14 M6.5 10.5 L10 14 L13.5 10.5" fill="none" stroke="#1E7FD8" stroke-width="1.3"/></svg>
<svg class="r" style="left:1316.5px;top:145.5px;" width="9.0" height="7.0" viewBox="0 0 9.0 7.0"><path d="M1 1.75 L4.5 5.25 L8.0 1.75" fill="none" stroke="#424242" stroke-width="1.2"/></svg>
<svg class="r" style="left:1290px;top:171px;" width="20" height="20" viewBox="0 0 20 20"><path d="M1.8 10 L5.2 6.6 L13.4 14.8 L10 18.2 Z" fill="#D9A3E6"/><path d="M10 1.8 L18.2 10 L10 18.2 L1.8 10 Z M5.2 6.6 L13.4 14.8" fill="none" stroke="#A43AB6" stroke-width="1.5" stroke-linejoin="round"/></svg>
<svg class="r" style="left:1316.5px;top:177.5px;" width="9.0" height="7.0" viewBox="0 0 9.0 7.0"><path d="M1 1.75 L4.5 5.25 L8.0 1.75" fill="none" stroke="#424242" stroke-width="1.2"/></svg>
<svg class="r" style="left:1364px;top:108px;" width="38" height="36" viewBox="0 0 38 36"><path d="M2 17.5 L7.5 2.8 L13 17.5 M4.2 12.3 H10.8" fill="none" stroke="#1E88E5" stroke-width="1.7"/><path d="M2.8 19.8 H12.5 L2.8 33.3 H13" fill="none" stroke="#424242" stroke-width="1.6"/><path d="M17.3 10 H36 V12.5 L29.3 20 V28.5 H24 V20 L17.3 12.5 Z" fill="none" stroke="#424242" stroke-width="1.5" stroke-linejoin="round"/></svg>
<div class="t" style="top:152.02px;font-size:14.3px;font-weight:400;color:#242424;letter-spacing:0.044px;left:1349.29px;">Classificar</div>
<div class="t" style="top:172.02px;font-size:14.3px;font-weight:400;color:#242424;letter-spacing:0.164px;left:1350.93px;">e Filtrar</div>
<svg class="r" style="left:1405.8px;top:174.8px;" width="8.4" height="6.4" viewBox="0 0 8.4 6.4"><path d="M1 1.6 L4.2 4.800000000000001 L7.4 1.6" fill="none" stroke="#424242" stroke-width="1.2"/></svg>
<svg class="r" style="left:1445px;top:107px;" width="38" height="38" viewBox="0 0 38 38"><circle cx="23" cy="14" r="12.5" fill="none" stroke="#424242" stroke-width="1.5"/><path d="M14 23 L1.5 36.5" stroke="#424242" stroke-width="1.6"/></svg>
<div class="t" style="top:152.00px;font-size:14.5px;font-weight:400;color:#242424;letter-spacing:0.113px;left:1429.34px;">Localizar e</div>
<div class="t" style="top:172.00px;font-size:14.5px;font-weight:400;color:#242424;letter-spacing:0.04px;left:1423.85px;">Selecionar</div>
<svg class="r" style="left:1497.8px;top:174.8px;" width="8.4" height="6.4" viewBox="0 0 8.4 6.4"><path d="M1 1.6 L4.2 4.800000000000001 L7.4 1.6" fill="none" stroke="#424242" stroke-width="1.2"/></svg>
<div class="t" style="top:203.02px;font-size:13px;font-weight:400;color:#424242;letter-spacing:-0.051px;left:1376.46px;">Edição</div>
<div class="r" style="left:1519px;top:104px;width:1px;height:110px;background:#D6D6D6;"></div>
<svg class="r" style="left:1557px;top:107px;" width="37" height="37" viewBox="0 0 37 37"><rect x="1" y="1" width="35" height="35" fill="none" stroke="#E0573A" stroke-width="2"/><rect x="5" y="5" width="12" height="12" fill="none" stroke="#E0573A" stroke-width="1.8"/><rect x="20" y="5" width="12" height="12" fill="none" stroke="#E0573A" stroke-width="1.8"/><rect x="5" y="20" width="12" height="12" fill="none" stroke="#E0573A" stroke-width="1.8"/><rect x="20" y="20" width="12" height="12" fill="none" stroke="#E0573A" stroke-width="1.8"/></svg>
<div class="t" style="top:152.02px;font-size:14.6px;font-weight:400;color:#242424;letter-spacing:0.118px;left:1532.84px;">Suplementos</div>
<div class="t" style="top:203.02px;font-size:13px;font-weight:400;color:#424242;letter-spacing:-0.041px;left:1536.41px;">Suplementos</div>
<div class="r" style="left:1631px;top:104px;width:1px;height:110px;background:#D6D6D6;"></div>
<svg class="r" style="left:1650px;top:109px;" width="38" height="35" viewBox="0 0 38 35"><defs><linearGradient id="cg1" x1="0" y1="0" x2="0" y2="1"><stop offset="0" stop-color="#1A9CF0"/><stop offset="0.5" stop-color="#3DB57A"/><stop offset="1" stop-color="#F2C230"/></linearGradient><linearGradient id="cg2" x1="0" y1="0" x2="0" y2="1"><stop offset="0" stop-color="#B050E0"/><stop offset="0.55" stop-color="#F0587A"/><stop offset="1" stop-color="#F89B4A"/></linearGradient></defs><path d="M11 0.5 H24 Q28 0.5 26.5 4 L18 24 Q16.5 27.5 12.5 27.5 H4 Q0 27.5 1.2 24 L8.5 4 Q9.8 0.5 12.5 0.5 Z" fill="url(#cg1)"/><path d="M17 0.5 H24 Q28 0.5 26.5 4 L25 8 H19 Z" fill="#2456D8"/><path d="M25 7 H33 Q37.5 7 36 10.5 L28.5 30.5 Q27.2 34 23.5 34 H13.5 Q9.5 34 11 30.5 L19.5 10.5 Q20.8 7 24 7 Z" fill="url(#cg2)" stroke="#fff" stroke-width="1.5"/><path d="M11 30.5 L13 25 H18 L16 30 Q14.5 34 13.5 34 Q9.5 34 11 30.5Z" fill="#E8484A"/></svg>
<div class="t" style="top:153.02px;font-size:15.6px;font-weight:400;color:#242424;left:1645.50px;">Copilot</div>
<svg class="r" style="left:1663.8px;top:176.8px;" width="8.4" height="6.4" viewBox="0 0 8.4 6.4"><path d="M1 1.6 L4.2 4.800000000000001 L7.4 1.6" fill="none" stroke="#424242" stroke-width="1.2"/></svg>
<div class="r" style="left:1706px;top:104px;width:1px;height:110px;background:#D6D6D6;"></div>
<svg class="r" style="left:1735px;top:110px;" width="34" height="37" viewBox="0 0 34 37"><path d="M14.5 29 H5 Q2.5 29 2.5 26.5 V4 Q2.5 1.5 5 1.5 H18 L24.5 8 V17" fill="none" stroke="#1E6FD8" stroke-width="1.5" stroke-linejoin="round"/><path d="M11.5 6 Q13.5 6 12.5 11 Q12 14 9 19 Q7 22.5 5.5 21 Q5 19 10 17.5 Q15 16.5 19 17 Q20.5 17.5 19.5 18.5 Q17 19 14 15.5 Q11 12 11 8 Q11 6 11.5 6Z" fill="none" stroke="#1E6FD8" stroke-width="0.9"/><rect x="16" y="24" width="7" height="11" rx="3.5" transform="rotate(45 19.5 29.5)" fill="#fff" stroke="#1E6FD8" stroke-width="1.6"/><rect x="22.5" y="17.5" width="7" height="11" rx="3.5" transform="rotate(45 26 23)" fill="none" stroke="#1E6FD8" stroke-width="1.6"/></svg>
<div class="t" style="top:152.02px;font-size:14.6px;font-weight:400;color:#242424;left:1735.00px;">Crie</div>
<div class="t" style="top:172.02px;font-size:14.6px;font-weight:400;color:#242424;left:1723.00px;">um PDF</div>
<div class="t" style="top:203.02px;font-size:13px;font-weight:400;color:#424242;letter-spacing:0.194px;left:1711.00px;">Adobe Acr...</div>
<div class="r" style="left:1789px;top:104px;width:1px;height:110px;background:#D6D6D6;"></div>
<svg class="r" style="left:1810px;top:105px;" width="42" height="42" viewBox="0 0 42 42"><circle cx="21" cy="21" r="20.3" fill="#303030"/><text x="21" y="23.5" text-anchor="middle" font-family="Liberation Sans" font-weight="700" font-size="14.5" letter-spacing="-0.3" fill="#EDEDED">GPT</text><text x="21" y="29.5" text-anchor="middle" font-family="Liberation Sans" font-size="3.6" fill="#bbb">EXCEL</text><path d="M9 28.3 H13.5 M28.5 28.3 H33" stroke="#bbb" stroke-width="0.7"/></svg>
<div class="t" style="top:152.02px;font-size:14.3px;font-weight:400;color:#242424;letter-spacing:-0.5px;left:1802.50px;">ChatGPT</div>
<div class="t" style="top:172.02px;font-size:14.3px;font-weight:400;color:#242424;left:1803.00px;">for Excel</div>
<div class="t" style="top:203.02px;font-size:13px;font-weight:400;color:#424242;left:1825.00px;">AI</div>
<div class="r" style="left:1872px;top:104px;width:1px;height:110px;background:#D6D6D6;"></div>
<svg class="r" style="left:1884px;top:200px;" width="16" height="10" viewBox="0 0 16 10"><path d="M1.5 1.5 L8 8 L14.5 1.5" fill="none" stroke="#424242" stroke-width="1.4"/></svg>
<div class="r" style="left:10px;top:232px;width:168px;height:29.5px;background:#fff;border-radius:6px;box-shadow:0 0 0 1px #D0D4D2;"></div>
<div class="t" style="top:240.00px;font-size:15.5px;font-weight:400;color:#242424;letter-spacing:-0.213px;left:17.00px;">A1</div>
<svg class="r" style="left:157px;top:243px;" width="14" height="9" viewBox="0 0 14 9"><path d="M1 1.5 L7 7.5 L13 1.5" fill="none" stroke="#424242" stroke-width="1.4"/></svg>
<svg class="r" style="left:188px;top:240px;" width="6" height="17" viewBox="0 0 6 17"><rect x="1" y="1" width="3.2" height="3.2" fill="#333"/><rect x="1" y="6.8" width="3.2" height="3.2" fill="#333"/><rect x="1" y="12.6" width="3.2" height="3.2" fill="#333"/></svg>
<div class="r" style="left:204px;top:232px;width:105px;height:29.5px;background:#fff;border-radius:6px;box-shadow:0 0 0 1px #D0D4D2;"></div>
<svg class="r" style="left:211px;top:239px;" width="16" height="16" viewBox="0 0 16 16"><path d="M1.5 1.5 L14.5 14.5 M14.5 1.5 L1.5 14.5" stroke="#9a9a9a" stroke-width="1.2"/></svg>
<svg class="r" style="left:238px;top:239px;" width="22" height="16" viewBox="0 0 22 16"><path d="M1.5 8 L7.5 14 L20.5 1.5" fill="none" stroke="#9a9a9a" stroke-width="1.2"/></svg>
<div class="t" style="top:236.00px;font-size:20px;font-weight:400;color:#8a8a8a;letter-spacing:-0.5px;left:270.00px;font-family:'Liberation Serif',serif;font-style:italic;">fx</div>
<svg class="r" style="left:296px;top:243px;" width="11" height="8" viewBox="0 0 11 8"><path d="M1 1 L5.5 6 L10 1" fill="none" stroke="#9a9a9a" stroke-width="1.1"/></svg>
<div class="r" style="left:316px;top:232px;width:1594px;height:29.5px;background:#fff;border-radius:6px;box-shadow:0 0 0 1px #D0D4D2;"></div>
<svg class="r" style="left:1890px;top:242px;" width="14" height="9" viewBox="0 0 14 9"><path d="M1 1.5 L7 7.5 L13 1.5" fill="none" stroke="#424242" stroke-width="1.3"/></svg>
<div class="r" style="left:0;top:270px;width:1894px;height:683px;background:#fff;overflow:hidden">
<div class="r" style="left:0px;top:0px;width:1894px;height:26px;background:#F0F0F0;"></div>
<div class="r" style="left:36px;top:0px;width:88px;height:26px;background:#E0E0E0;"></div>
<div class="r" style="left:0px;top:25px;width:1894px;height:1px;background:#C6C6C6;"></div>
<svg class="r" style="left:13px;top:3px;" width="20" height="20" viewBox="0 0 20 20"><path d="M19.5 1 V19 H1.5 Z" fill="#DCDCDC"/></svg>
<div class="r" style="left:124px;top:0px;width:1px;height:25px;background:#D4D4D4;"></div>
<div class="t" style="top:5.01px;font-size:16.5px;font-weight:400;color:#107C41;left:40.00px;width:80px;text-align:center;">A</div>
<div class="r" style="left:212px;top:0px;width:1px;height:25px;background:#D4D4D4;"></div>
<div class="t" style="top:5.01px;font-size:16.5px;font-weight:400;color:#424242;left:128.00px;width:80px;text-align:center;">B</div>
<div class="r" style="left:300px;top:0px;width:1px;height:25px;background:#D4D4D4;"></div>
<div class="t" style="top:5.01px;font-size:16.5px;font-weight:400;color:#424242;left:216.00px;width:80px;text-align:center;">C</div>
<div class="r" style="left:326px;top:0px;width:1px;height:25px;background:#D4D4D4;"></div>
<div class="t" style="top:5.01px;font-size:16.5px;font-weight:400;color:#424242;left:273.00px;width:80px;text-align:center;">D</div>
<div class="r" style="left:380px;top:0px;width:1px;height:25px;background:#D4D4D4;"></div>
<div class="t" style="top:5.01px;font-size:16.5px;font-weight:400;color:#424242;left:313.00px;width:80px;text-align:center;">E</div>
<div class="r" style="left:496px;top:0px;width:1px;height:25px;background:#D4D4D4;"></div>
<div class="t" style="top:5.01px;font-size:16.5px;font-weight:400;color:#424242;left:398.00px;width:80px;text-align:center;">F</div>
<div class="r" style="left:657px;top:0px;width:1px;height:25px;background:#D4D4D4;"></div>
<div class="t" style="top:5.01px;font-size:16.5px;font-weight:400;color:#424242;left:536.50px;width:80px;text-align:center;">G</div>
<div class="r" style="left:809px;top:0px;width:1px;height:25px;background:#D4D4D4;"></div>
<div class="t" style="top:5.01px;font-size:16.5px;font-weight:400;color:#424242;left:693.00px;width:80px;text-align:center;">H</div>
<div class="r" style="left:925px;top:0px;width:1px;height:25px;background:#D4D4D4;"></div>
<div class="t" style="top:5.01px;font-size:16.5px;font-weight:400;color:#424242;left:827.00px;width:80px;text-align:center;">I</div>
<div class="r" style="left:1164px;top:0px;width:1px;height:25px;background:#D4D4D4;"></div>
<div class="t" style="top:5.01px;font-size:16.5px;font-weight:400;color:#424242;left:1004.50px;width:80px;text-align:center;">J</div>
<div class="r" style="left:1361px;top:0px;width:1px;height:25px;background:#D4D4D4;"></div>
<div class="t" style="top:5.01px;font-size:16.5px;font-weight:400;color:#424242;left:1222.50px;width:80px;text-align:center;">K</div>
<div class="r" style="left:1543px;top:0px;width:1px;height:25px;background:#D4D4D4;"></div>
<div class="t" style="top:5.01px;font-size:16.5px;font-weight:400;color:#424242;left:1412.00px;width:80px;text-align:center;">L</div>
<div class="r" style="left:1718px;top:0px;width:1px;height:25px;background:#D4D4D4;"></div>
<div class="t" style="top:5.01px;font-size:16.5px;font-weight:400;color:#424242;left:1590.50px;width:80px;text-align:center;">M</div>
<div class="r" style="left:1801px;top:0px;width:1px;height:25px;background:#D4D4D4;"></div>
<div class="t" style="top:5.01px;font-size:16.5px;font-weight:400;color:#424242;left:1719.50px;width:80px;text-align:center;">N</div>
<div class="r" style="left:1889px;top:0px;width:1px;height:25px;background:#D4D4D4;"></div>
<div class="t" style="top:5.01px;font-size:16.5px;font-weight:400;color:#424242;left:1805.00px;width:80px;text-align:center;">O</div>
<div class="r" style="left:0px;top:26px;width:36px;height:657px;background:#F0F0F0;"></div>
<div class="r" style="left:0px;top:26px;width:36px;height:73px;background:#E0E0E0;"></div>
<div class="r" style="left:35px;top:26px;width:1px;height:657px;background:#C6C6C6;"></div>
<div class="r" style="left:4px;top:99px;width:31px;height:1px;background:#D4D4D4;"></div>
<div class="t" style="top:79.98px;font-size:16px;font-weight:400;color:#107C41;left:0.00px;width:36px;text-align:center;">1</div>
<div class="r" style="left:4px;top:125px;width:31px;height:1px;background:#D4D4D4;"></div>
<div class="t" style="top:105.98px;font-size:16px;font-weight:400;color:#424242;left:0.00px;width:36px;text-align:center;">2</div>
<div class="r" style="left:4px;top:156px;width:31px;height:1px;background:#D4D4D4;"></div>
<div class="t" style="top:136.98px;font-size:16px;font-weight:400;color:#424242;left:0.00px;width:36px;text-align:center;">3</div>
<div class="r" style="left:4px;top:187px;width:31px;height:1px;background:#D4D4D4;"></div>
<div class="t" style="top:167.98px;font-size:16px;font-weight:400;color:#424242;left:0.00px;width:36px;text-align:center;">4</div>
<div class="r" style="left:4px;top:218px;width:31px;height:1px;background:#D4D4D4;"></div>
<div class="t" style="top:198.98px;font-size:16px;font-weight:400;color:#424242;left:0.00px;width:36px;text-align:center;">5</div>
<div class="r" style="left:4px;top:249px;width:31px;height:1px;background:#D4D4D4;"></div>
<div class="t" style="top:229.98px;font-size:16px;font-weight:400;color:#424242;left:0.00px;width:36px;text-align:center;">6</div>
<div class="r" style="left:4px;top:280px;width:31px;height:1px;background:#D4D4D4;"></div>
<div class="t" style="top:260.98px;font-size:16px;font-weight:400;color:#424242;left:0.00px;width:36px;text-align:center;">7</div>
<div class="r" style="left:4px;top:311px;width:31px;height:1px;background:#D4D4D4;"></div>
<div class="t" style="top:291.98px;font-size:16px;font-weight:400;color:#424242;left:0.00px;width:36px;text-align:center;">8</div>
<div class="r" style="left:4px;top:342px;width:31px;height:1px;background:#D4D4D4;"></div>
<div class="t" style="top:322.98px;font-size:16px;font-weight:400;color:#424242;left:0.00px;width:36px;text-align:center;">9</div>
<div class="r" style="left:4px;top:373px;width:31px;height:1px;background:#D4D4D4;"></div>
<div class="t" style="top:353.98px;font-size:16px;font-weight:400;color:#424242;left:0.00px;width:36px;text-align:center;">10</div>
<div class="r" style="left:4px;top:404px;width:31px;height:1px;background:#D4D4D4;"></div>
<div class="t" style="top:384.98px;font-size:16px;font-weight:400;color:#424242;left:0.00px;width:36px;text-align:center;">11</div>
<div class="r" style="left:4px;top:435px;width:31px;height:1px;background:#D4D4D4;"></div>
<div class="t" style="top:415.98px;font-size:16px;font-weight:400;color:#424242;left:0.00px;width:36px;text-align:center;">12</div>
<div class="r" style="left:4px;top:466px;width:31px;height:1px;background:#D4D4D4;"></div>
<div class="t" style="top:446.98px;font-size:16px;font-weight:400;color:#424242;left:0.00px;width:36px;text-align:center;">13</div>
<div class="r" style="left:4px;top:497px;width:31px;height:1px;background:#D4D4D4;"></div>
<div class="t" style="top:477.98px;font-size:16px;font-weight:400;color:#424242;left:0.00px;width:36px;text-align:center;">14</div>
<div class="r" style="left:4px;top:528px;width:31px;height:1px;background:#D4D4D4;"></div>
<div class="t" style="top:508.98px;font-size:16px;font-weight:400;color:#424242;left:0.00px;width:36px;text-align:center;">15</div>
<div class="r" style="left:4px;top:559px;width:31px;height:1px;background:#D4D4D4;"></div>
<div class="t" style="top:539.98px;font-size:16px;font-weight:400;color:#424242;left:0.00px;width:36px;text-align:center;">16</div>
<div class="r" style="left:4px;top:590px;width:31px;height:1px;background:#D4D4D4;"></div>
<div class="t" style="top:570.98px;font-size:16px;font-weight:400;color:#424242;left:0.00px;width:36px;text-align:center;">17</div>
<div class="r" style="left:4px;top:621px;width:31px;height:1px;background:#D4D4D4;"></div>
<div class="t" style="top:601.98px;font-size:16px;font-weight:400;color:#424242;left:0.00px;width:36px;text-align:center;">18</div>
<div class="r" style="left:4px;top:647px;width:31px;height:1px;background:#D4D4D4;"></div>
<div class="t" style="top:627.98px;font-size:16px;font-weight:400;color:#424242;left:0.00px;width:36px;text-align:center;">19</div>
<div class="r" style="left:4px;top:673px;width:31px;height:1px;background:#D4D4D4;"></div>
<div class="t" style="top:653.98px;font-size:16px;font-weight:400;color:#424242;left:0.00px;width:36px;text-align:center;">20</div>
<div class="r" style="left:4px;top:699px;width:31px;height:1px;background:#D4D4D4;"></div>
<div class="t" style="top:679.98px;font-size:16px;font-weight:400;color:#424242;left:0.00px;width:36px;text-align:center;">21</div>
</div>
<div class="r" style="left:36px;top:296px;width:1858px;height:73px;background:#3A3839;"></div>
<div class="r" style="left:37px;top:369px;width:264px;height:336px;background:#3A3839;"></div>
<div class="r" style="left:300px;top:643px;width:1px;height:31px;background:#000;"></div>
<div class="r" style="left:37px;top:460px;width:263px;height:43px;background:linear-gradient(90deg,#04702F 0%,#05803A 25%,#009A44 55%,#00B050 92%,#00B050 100%);"></div>
<div class="t" style="top:314.01px;font-size:38px;font-weight:700;color:#fff;letter-spacing:1.561px;left:307.31px;">Veículos</div>
<svg class="r" style="left:52px;top:406px;" width="21" height="27" viewBox="0 0 21 27"><path d="M1 1 H14 L20 7 V26 H1 Z" fill="none" stroke="#fff" stroke-width="1.6"/><path d="M14 1 V7 H20" fill="none" stroke="#fff" stroke-width="1.3"/><path d="M5 12.2 H16 M5 15.7 H16 M5 19.2 H16 M5 22.7 H16" stroke="#fff" stroke-width="1.2"/></svg>
<div class="t" style="top:409.98px;font-size:23.5px;font-weight:400;color:#fff;letter-spacing:0.689px;left:97.58px;">Cadastro</div>
<svg class="r" style="left:117px;top:469px;" width="29" height="19" viewBox="0 0 29 19"><path d="M1 4 Q1 1.5 4 1.5 L18 2.5 V13 H1 Z" fill="#fff"/><path d="M19 3 H23 Q24.5 3 25.5 5 L28.5 10.5 V14 H19 Z" fill="#fff"/><path d="M21 5 H23.5 L25.5 9 H21 Z" fill="#009A44"/><rect x="0" y="13" width="29" height="2" fill="#fff"/><circle cx="6" cy="15.5" r="3.2" fill="#fff" stroke="#009A44" stroke-width="1.3"/><circle cx="22.5" cy="15.5" r="3.2" fill="#fff" stroke="#009A44" stroke-width="1.3"/></svg>
<div class="t" style="top:469.98px;font-size:22.5px;font-weight:700;color:#fff;letter-spacing:1.009px;left:166.39px;">Veículos</div>
<svg class="r" style="left:51px;top:529px;" width="25" height="26" viewBox="0 0 25 26"><path d="M20.5 1 Q24 1 24 4.5 Q24 7 20.5 11.5 Q17 7 17 4.5 Q17 1 20.5 1Z" fill="#fff"/><circle cx="20.5" cy="4.5" r="1.3" fill="#3A3839"/><path d="M4.5 13 Q8.5 13 8.5 17 Q8.5 19.5 4.5 25 Q0.5 19.5 0.5 17 Q0.5 13 4.5 13Z" fill="#fff"/><circle cx="4.5" cy="17" r="1.5" fill="#3A3839"/><path d="M20 13 Q12 14 12 17.5 Q12 20 18 20.5 Q22 21.5 20 24 Q18 25 10 24.5" fill="none" stroke="#fff" stroke-width="1.5" stroke-dasharray="1.5 1.6"/></svg>
<div class="t" style="top:533.01px;font-size:24px;font-weight:400;color:#fff;letter-spacing:0.155px;left:97.58px;">Rotas</div>
<svg class="r" style="left:50px;top:591px;" width="27" height="27" viewBox="0 0 27 27"><path d="M1.5 1.5 L14 14" stroke="#fff" stroke-width="1.6"/><path d="M25.5 4.5 L22 8 L19.5 7.5 L19 5 L22.5 1.5 Q17.5 0.5 16.5 5 Q16 7 16.8 8.2 L1.8 23.2 Q0.5 25 2.2 25.8 Q3.5 26.5 4.5 25.2 L19.3 10.5 Q21 11.3 23 10.8 Q27 9.5 25.5 4.5Z" fill="#fff"/><path d="M13.5 16.5 L22 25 Q23.8 26.5 25.3 25 Q26.5 23.5 25 22 L16.5 13.5 Z" fill="#fff"/></svg>
<div class="t" style="top:594.99px;font-size:24.2px;font-weight:400;color:#fff;letter-spacing:0.909px;left:97.56px;">Manutenção</div>
<svg class="r" style="left:54px;top:648px;" width="21" height="27" viewBox="0 0 21 27"><path d="M1 1 H14 L20 7 V26 H1 Z" fill="none" stroke="#fff" stroke-width="1.6"/><path d="M14 1 V7 H20" fill="none" stroke="#fff" stroke-width="1.3"/><path d="M5 12.2 H16 M5 15.7 H16 M5 19.2 H16 M5 22.7 H16" stroke="#fff" stroke-width="1.2"/></svg>
<div class="t" style="top:650.99px;font-size:24.2px;font-weight:400;color:#fff;letter-spacing:1.067px;left:98.36px;">Documentos</div>
<div class="r" style="left:326px;top:395px;width:1476px;height:31px;background:#000;"></div>
<div class="r" style="left:1165px;top:396px;width:196px;height:30px;background:#2F5597;"></div>
<div class="t" style="top:403.00px;font-size:16.8px;font-weight:700;color:#fff;letter-spacing:2.448px;left:154.22px;width:400px;text-align:center;">N°</div>
<div class="t" style="top:403.00px;font-size:16.8px;font-weight:700;color:#fff;letter-spacing:1.019px;left:238.51px;width:400px;text-align:center;">Placa</div>
<div class="t" style="top:403.00px;font-size:16.8px;font-weight:700;color:#fff;letter-spacing:1.512px;left:377.26px;width:400px;text-align:center;">Veículo</div>
<div class="t" style="top:403.00px;font-size:16.8px;font-weight:700;color:#fff;letter-spacing:0.893px;left:533.45px;width:400px;text-align:center;">Ano Fabricação</div>
<div class="t" style="top:403.00px;font-size:16.8px;font-weight:700;color:#fff;letter-spacing:0.972px;left:667.49px;width:400px;text-align:center;">Cor</div>
<div class="t" style="top:403.00px;font-size:16.8px;font-weight:700;color:#fff;letter-spacing:1.127px;left:845.06px;width:400px;text-align:center;">Rodagem Aquisição (Km)</div>
<div class="t" style="top:403.00px;font-size:16.8px;font-weight:700;color:#fff;letter-spacing:1.316px;left:1063.16px;width:400px;text-align:center;">Rodagem Atual (Km)</div>
<div class="t" style="top:403.00px;font-size:16.8px;font-weight:700;color:#fff;letter-spacing:0.919px;left:1252.46px;width:400px;text-align:center;">Carga Máxima (Kg)</div>
<div class="t" style="top:403.00px;font-size:16.8px;font-weight:700;color:#fff;letter-spacing:1.056px;left:1431.03px;width:400px;text-align:center;">Tipo de veículo</div>
<div class="t" style="top:403.00px;font-size:16.8px;font-weight:700;color:#fff;letter-spacing:2.379px;left:1560.69px;width:400px;text-align:center;">Imagem</div>
<div class="r" style="left:0;top:0;width:1894px;height:953px;overflow:hidden">
<div class="r" style="left:326px;top:457px;width:1476px;height:1px;background:#000;"></div>
<div class="t" style="top:433.02px;font-size:17.2px;font-weight:400;color:#000;letter-spacing:-0.6px;left:202.70px;width:300px;text-align:center;">1</div>
<div class="t" style="top:433.02px;font-size:17.2px;font-weight:400;color:#000;letter-spacing:0.969px;left:288.48px;width:300px;text-align:center;">placa001</div>
<div class="t" style="top:433.02px;font-size:17.2px;font-weight:400;color:#000;letter-spacing:0.892px;left:426.95px;width:300px;text-align:center;">Caminhão 1</div>
<div class="t" style="top:433.02px;font-size:17.2px;font-weight:400;color:#000;letter-spacing:1.527px;left:583.76px;width:300px;text-align:center;">2020</div>
<div class="t" style="top:433.02px;font-size:17.2px;font-weight:400;color:#000;letter-spacing:1.523px;left:717.76px;width:300px;text-align:center;">Branco</div>
<div class="t" style="top:433.02px;font-size:17.2px;font-weight:400;color:#000;letter-spacing:1.682px;left:957.88px;width:200px;text-align:right;">40.000</div>
<div class="t" style="top:433.02px;font-size:17.2px;font-weight:400;color:#000;letter-spacing:0.53px;left:1153.73px;width:200px;text-align:right;">52.585</div>
<div class="t" style="top:433.02px;font-size:17.2px;font-weight:400;color:#000;letter-spacing:0.545px;left:1335.75px;width:200px;text-align:right;">12.000</div>
<div class="t" style="top:433.02px;font-size:17.2px;font-weight:400;color:#000;letter-spacing:1.188px;left:1481.09px;width:300px;text-align:center;">Terceiro</div>
<div class="r" style="left:326px;top:488px;width:1476px;height:1px;background:#000;"></div>
<div class="t" style="top:464.02px;font-size:17.2px;font-weight:400;color:#000;letter-spacing:-0.188px;left:202.91px;width:300px;text-align:center;">2</div>
<div class="t" style="top:464.02px;font-size:17.2px;font-weight:400;color:#000;letter-spacing:1.476px;left:288.74px;width:300px;text-align:center;">placa002</div>
<div class="t" style="top:464.02px;font-size:17.2px;font-weight:400;color:#000;letter-spacing:1.959px;left:427.48px;width:300px;text-align:center;">Van</div>
<div class="t" style="top:464.02px;font-size:17.2px;font-weight:400;color:#000;letter-spacing:-0.138px;left:582.93px;width:300px;text-align:center;">2021</div>
<div class="t" style="top:464.02px;font-size:17.2px;font-weight:400;color:#000;letter-spacing:1.131px;left:717.57px;width:300px;text-align:center;">Prata</div>
<div class="t" style="top:464.02px;font-size:17.2px;font-weight:400;color:#000;letter-spacing:1.227px;left:957.43px;width:200px;text-align:right;">50.500</div>
<div class="t" style="top:464.02px;font-size:17.2px;font-weight:400;color:#000;letter-spacing:1.447px;left:1154.65px;width:200px;text-align:right;">64.600</div>
<div class="t" style="top:464.02px;font-size:17.2px;font-weight:400;color:#000;letter-spacing:1.57px;left:1336.77px;width:200px;text-align:right;">4.000</div>
<div class="t" style="top:464.02px;font-size:17.2px;font-weight:400;color:#000;letter-spacing:1.419px;left:1481.21px;width:300px;text-align:center;">Próprio</div>
<div class="r" style="left:326px;top:519px;width:1476px;height:1px;background:#000;"></div>
<div class="t" style="top:495.02px;font-size:17.2px;font-weight:400;color:#000;letter-spacing:-0.304px;left:202.85px;width:300px;text-align:center;">3</div>
<div class="t" style="top:495.02px;font-size:17.2px;font-weight:400;color:#000;letter-spacing:1.497px;left:288.75px;width:300px;text-align:center;">placa003</div>
<div class="t" style="top:495.02px;font-size:17.2px;font-weight:400;color:#000;letter-spacing:1.287px;left:427.14px;width:300px;text-align:center;">Caminhão 2</div>
<div class="t" style="top:495.02px;font-size:17.2px;font-weight:400;color:#000;letter-spacing:-0.138px;left:582.93px;width:300px;text-align:center;">2021</div>
<div class="t" style="top:495.02px;font-size:17.2px;font-weight:400;color:#000;letter-spacing:1.131px;left:717.57px;width:300px;text-align:center;">Prata</div>
<div class="t" style="top:495.02px;font-size:17.2px;font-weight:400;color:#000;letter-spacing:1.227px;left:957.43px;width:200px;text-align:right;">50.500</div>
<div class="t" style="top:495.02px;font-size:17.2px;font-weight:400;color:#000;letter-spacing:0.072px;left:1153.27px;width:200px;text-align:right;">63.198</div>
<div class="t" style="top:495.02px;font-size:17.2px;font-weight:400;color:#000;letter-spacing:0.869px;left:1336.07px;width:200px;text-align:right;">10.000</div>
<div class="t" style="top:495.02px;font-size:17.2px;font-weight:400;color:#000;letter-spacing:1.188px;left:1481.09px;width:300px;text-align:center;">Terceiro</div>
<div class="r" style="left:326px;top:550px;width:1476px;height:1px;background:#000;"></div>
<div class="t" style="top:526.02px;font-size:17.2px;font-weight:400;color:#000;letter-spacing:0.411px;left:203.21px;width:300px;text-align:center;">4</div>
<div class="t" style="top:526.02px;font-size:17.2px;font-weight:400;color:#000;letter-spacing:1.636px;left:288.82px;width:300px;text-align:center;">placa004</div>
<div class="t" style="top:526.02px;font-size:17.2px;font-weight:400;color:#000;letter-spacing:0.483px;left:426.74px;width:300px;text-align:center;">SAVEIRO</div>
<div class="t" style="top:526.02px;font-size:17.2px;font-weight:400;color:#000;letter-spacing:-0.138px;left:582.93px;width:300px;text-align:center;">2021</div>
<div class="t" style="top:526.02px;font-size:17.2px;font-weight:400;color:#000;letter-spacing:1.523px;left:717.76px;width:300px;text-align:center;">Branco</div>
<div class="t" style="top:526.02px;font-size:17.2px;font-weight:400;color:#000;letter-spacing:0.952px;left:957.15px;width:200px;text-align:right;">57.500</div>
<div class="t" style="top:526.02px;font-size:17.2px;font-weight:400;color:#000;letter-spacing:-0.6px;left:1152.60px;width:200px;text-align:right;">71.421</div>
<div class="t" style="top:526.02px;font-size:17.2px;font-weight:400;color:#000;letter-spacing:0.806px;left:1336.01px;width:200px;text-align:right;">6.667</div>
<div class="t" style="top:526.02px;font-size:17.2px;font-weight:400;color:#000;letter-spacing:1.188px;left:1481.09px;width:300px;text-align:center;">Terceiro</div>
<div class="r" style="left:326px;top:581px;width:1476px;height:1px;background:#000;"></div>
<div class="t" style="top:557.02px;font-size:17.2px;font-weight:400;color:#000;letter-spacing:-0.218px;left:202.89px;width:300px;text-align:center;">5</div>
<div class="t" style="top:557.02px;font-size:17.2px;font-weight:400;color:#000;letter-spacing:1.497px;left:288.75px;width:300px;text-align:center;">placa005</div>
<div class="t" style="top:557.02px;font-size:17.2px;font-weight:400;color:#000;letter-spacing:0.172px;left:426.59px;width:300px;text-align:center;">STRADA</div>
<div class="t" style="top:557.02px;font-size:17.2px;font-weight:400;color:#000;letter-spacing:-0.138px;left:582.93px;width:300px;text-align:center;">2021</div>
<div class="t" style="top:557.02px;font-size:17.2px;font-weight:400;color:#000;letter-spacing:1.131px;left:717.57px;width:300px;text-align:center;">Prata</div>
<div class="t" style="top:557.02px;font-size:17.2px;font-weight:400;color:#000;letter-spacing:0.772px;left:956.97px;width:200px;text-align:right;">62.750</div>
<div class="t" style="top:557.02px;font-size:17.2px;font-weight:400;color:#000;letter-spacing:0.578px;left:1153.78px;width:200px;text-align:right;">77.539</div>
<div class="t" style="top:557.02px;font-size:17.2px;font-weight:400;color:#000;letter-spacing:0.626px;left:1335.83px;width:200px;text-align:right;">5.667</div>
<div class="t" style="top:557.02px;font-size:17.2px;font-weight:400;color:#000;letter-spacing:1.419px;left:1481.21px;width:300px;text-align:center;">Próprio</div>
<div class="r" style="left:326px;top:612px;width:1476px;height:1px;background:#000;"></div>
<div class="t" style="top:588.02px;font-size:17.2px;font-weight:400;color:#000;letter-spacing:0.499px;left:203.25px;width:300px;text-align:center;">6</div>
<div class="t" style="top:588.02px;font-size:17.2px;font-weight:400;color:#000;letter-spacing:1.575px;left:288.79px;width:300px;text-align:center;">placa006</div>
<div class="t" style="top:588.02px;font-size:17.2px;font-weight:400;color:#000;letter-spacing:0.871px;left:426.94px;width:300px;text-align:center;">CAMINHÃO</div>
<div class="t" style="top:588.02px;font-size:17.2px;font-weight:400;color:#000;letter-spacing:-0.138px;left:582.93px;width:300px;text-align:center;">2021</div>
<div class="t" style="top:588.02px;font-size:17.2px;font-weight:400;color:#000;letter-spacing:1.5px;left:717.75px;width:300px;text-align:center;">Preto</div>
<div class="t" style="top:588.02px;font-size:17.2px;font-weight:400;color:#000;letter-spacing:1.535px;left:957.74px;width:200px;text-align:right;">68.000</div>
<div class="t" style="top:588.02px;font-size:17.2px;font-weight:400;color:#000;letter-spacing:-0.46px;left:1152.74px;width:200px;text-align:right;">82.411</div>
<div class="t" style="top:588.02px;font-size:17.2px;font-weight:400;color:#000;letter-spacing:0.848px;left:1336.05px;width:200px;text-align:right;">4.667</div>
<div class="t" style="top:588.02px;font-size:17.2px;font-weight:400;color:#000;letter-spacing:1.188px;left:1481.09px;width:300px;text-align:center;">Terceiro</div>
<div class="r" style="left:326px;top:643px;width:1476px;height:1px;background:#000;"></div>
<div class="t" style="top:619.02px;font-size:17.2px;font-weight:400;color:#000;letter-spacing:0.058px;left:203.03px;width:300px;text-align:center;">7</div>
<div class="t" style="top:619.02px;font-size:17.2px;font-weight:400;color:#000;letter-spacing:1.511px;left:288.76px;width:300px;text-align:center;">placa007</div>
<div class="t" style="top:619.02px;font-size:17.2px;font-weight:400;color:#000;letter-spacing:2.353px;left:427.68px;width:300px;text-align:center;">Kombi</div>
<div class="t" style="top:619.02px;font-size:17.2px;font-weight:400;color:#000;letter-spacing:1.527px;left:583.76px;width:300px;text-align:center;">2020</div>
<div class="t" style="top:619.02px;font-size:17.2px;font-weight:400;color:#000;letter-spacing:1.523px;left:717.76px;width:300px;text-align:center;">Branco</div>
<div class="t" style="top:619.02px;font-size:17.2px;font-weight:400;color:#000;letter-spacing:1.682px;left:957.88px;width:200px;text-align:right;">40.000</div>
<div class="t" style="top:619.02px;font-size:17.2px;font-weight:400;color:#000;letter-spacing:0.9px;left:1154.10px;width:200px;text-align:right;">52.890</div>
<div class="t" style="top:619.02px;font-size:17.2px;font-weight:400;color:#000;letter-spacing:0.545px;left:1335.75px;width:200px;text-align:right;">12.000</div>
<div class="t" style="top:619.02px;font-size:17.2px;font-weight:400;color:#000;letter-spacing:1.188px;left:1481.09px;width:300px;text-align:center;">Terceiro</div>
<div class="r" style="left:326px;top:674px;width:1476px;height:1px;background:#000;"></div>
<div class="t" style="top:650.02px;font-size:17.2px;font-weight:400;color:#000;letter-spacing:0.608px;left:203.30px;width:300px;text-align:center;">8</div>
<div class="t" style="top:650.02px;font-size:17.2px;font-weight:400;color:#000;letter-spacing:1.615px;left:288.81px;width:300px;text-align:center;">placa008</div>
<div class="t" style="top:650.02px;font-size:17.2px;font-weight:400;color:#000;letter-spacing:0.562px;left:426.78px;width:300px;text-align:center;">Golf</div>
<div class="t" style="top:650.02px;font-size:17.2px;font-weight:400;color:#000;letter-spacing:-0.138px;left:582.93px;width:300px;text-align:center;">2021</div>
<div class="t" style="top:650.02px;font-size:17.2px;font-weight:400;color:#000;letter-spacing:1.131px;left:717.57px;width:300px;text-align:center;">Prata</div>
<div class="t" style="top:650.02px;font-size:17.2px;font-weight:400;color:#000;letter-spacing:1.227px;left:957.43px;width:200px;text-align:right;">50.500</div>
<div class="t" style="top:650.02px;font-size:17.2px;font-weight:400;color:#000;letter-spacing:0.98px;left:1154.18px;width:200px;text-align:right;">63.830</div>
<div class="t" style="top:650.02px;font-size:17.2px;font-weight:400;color:#000;letter-spacing:1.57px;left:1336.77px;width:200px;text-align:right;">4.000</div>
<div class="t" style="top:650.02px;font-size:17.2px;font-weight:400;color:#000;letter-spacing:1.419px;left:1481.21px;width:300px;text-align:center;">Próprio</div>
<div class="r" style="left:326px;top:705px;width:1476px;height:1px;background:#000;"></div>
<div class="t" style="top:681.02px;font-size:17.2px;font-weight:400;color:#000;letter-spacing:0.499px;left:203.25px;width:300px;text-align:center;">9</div>
<div class="t" style="top:681.02px;font-size:17.2px;font-weight:400;color:#000;letter-spacing:1.587px;left:288.79px;width:300px;text-align:center;">placa009</div>
<div class="t" style="top:681.02px;font-size:17.2px;font-weight:400;color:#000;letter-spacing:1.558px;left:427.28px;width:300px;text-align:center;">Furgão</div>
<div class="t" style="top:681.02px;font-size:17.2px;font-weight:400;color:#000;letter-spacing:-0.138px;left:582.93px;width:300px;text-align:center;">2021</div>
<div class="t" style="top:681.02px;font-size:17.2px;font-weight:400;color:#000;letter-spacing:1.131px;left:717.57px;width:300px;text-align:center;">Prata</div>
<div class="t" style="top:681.02px;font-size:17.2px;font-weight:400;color:#000;letter-spacing:1.227px;left:957.43px;width:200px;text-align:right;">50.500</div>
<div class="t" style="top:681.02px;font-size:17.2px;font-weight:400;color:#000;letter-spacing:0.926px;left:1154.13px;width:200px;text-align:right;">63.459</div>
<div class="t" style="top:681.02px;font-size:17.2px;font-weight:400;color:#000;letter-spacing:0.869px;left:1336.07px;width:200px;text-align:right;">10.000</div>
<div class="t" style="top:681.02px;font-size:17.2px;font-weight:400;color:#000;letter-spacing:1.188px;left:1481.09px;width:300px;text-align:center;">Terceiro</div>
<div class="r" style="left:326px;top:736px;width:1476px;height:1px;background:#000;"></div>
<div class="t" style="top:712.02px;font-size:17.2px;font-weight:400;color:#000;letter-spacing:-0.6px;left:202.70px;width:300px;text-align:center;">10</div>
<div class="t" style="top:712.02px;font-size:17.2px;font-weight:400;color:#000;letter-spacing:0.944px;left:288.47px;width:300px;text-align:center;">placa010</div>
<div class="t" style="top:712.02px;font-size:17.2px;font-weight:400;color:#000;letter-spacing:1.387px;left:427.19px;width:300px;text-align:center;">Caminhão Baú</div>
<div class="t" style="top:712.02px;font-size:17.2px;font-weight:400;color:#000;letter-spacing:-0.138px;left:582.93px;width:300px;text-align:center;">2021</div>
<div class="t" style="top:712.02px;font-size:17.2px;font-weight:400;color:#000;letter-spacing:1.523px;left:717.76px;width:300px;text-align:center;">Branco</div>
<div class="t" style="top:712.02px;font-size:17.2px;font-weight:400;color:#000;letter-spacing:0.952px;left:957.15px;width:200px;text-align:right;">57.500</div>
<div class="t" style="top:712.02px;font-size:17.2px;font-weight:400;color:#000;letter-spacing:0.733px;left:1153.93px;width:200px;text-align:right;">70.775</div>
<div class="t" style="top:712.02px;font-size:17.2px;font-weight:400;color:#000;letter-spacing:0.806px;left:1336.01px;width:200px;text-align:right;">6.667</div>
<div class="t" style="top:712.02px;font-size:17.2px;font-weight:400;color:#000;letter-spacing:1.188px;left:1481.09px;width:300px;text-align:center;">Terceiro</div>
<div class="r" style="left:326px;top:767px;width:1476px;height:1px;background:#000;"></div>
<div class="t" style="top:743.02px;font-size:17.2px;font-weight:400;color:#000;letter-spacing:-0.6px;left:202.70px;width:300px;text-align:center;">11</div>
<div class="t" style="top:743.02px;font-size:17.2px;font-weight:400;color:#000;letter-spacing:0.415px;left:288.21px;width:300px;text-align:center;">placa011</div>
<div class="r" style="left:496px;top:737px;width:161px;height:31px;overflow:hidden">
<div class="t" style="top:-5.98px;font-size:17.2px;font-weight:400;color:#000;letter-spacing:1.592px;left:-68.70px;width:300px;text-align:center;">Caminhão</div>
<div class="t" style="top:17.02px;font-size:17.2px;font-weight:400;color:#000;letter-spacing:1.766px;left:-68.62px;width:300px;text-align:center;">tanque</div>
</div>
<div class="t" style="top:743.02px;font-size:17.2px;font-weight:400;color:#000;letter-spacing:-0.138px;left:582.93px;width:300px;text-align:center;">2021</div>
<div class="t" style="top:743.02px;font-size:17.2px;font-weight:400;color:#000;letter-spacing:1.131px;left:717.57px;width:300px;text-align:center;">Prata</div>
<div class="t" style="top:743.02px;font-size:17.2px;font-weight:400;color:#000;letter-spacing:0.772px;left:956.97px;width:200px;text-align:right;">62.750</div>
<div class="t" style="top:743.02px;font-size:17.2px;font-weight:400;color:#000;letter-spacing:0.723px;left:1153.92px;width:200px;text-align:right;">78.363</div>
<div class="t" style="top:743.02px;font-size:17.2px;font-weight:400;color:#000;letter-spacing:0.626px;left:1335.83px;width:200px;text-align:right;">5.667</div>
<div class="t" style="top:743.02px;font-size:17.2px;font-weight:400;color:#000;letter-spacing:1.419px;left:1481.21px;width:300px;text-align:center;">Próprio</div>
<div class="r" style="left:326px;top:798px;width:1476px;height:1px;background:#000;"></div>
<div class="t" style="top:774.02px;font-size:17.2px;font-weight:400;color:#000;letter-spacing:-0.6px;left:202.70px;width:300px;text-align:center;">12</div>
<div class="t" style="top:774.02px;font-size:17.2px;font-weight:400;color:#000;letter-spacing:0.738px;left:288.37px;width:300px;text-align:center;">placa012</div>
<div class="t" style="top:774.02px;font-size:17.2px;font-weight:400;color:#000;letter-spacing:0.645px;left:426.82px;width:300px;text-align:center;">Saveiro 2</div>
<div class="t" style="top:774.02px;font-size:17.2px;font-weight:400;color:#000;letter-spacing:-0.138px;left:582.93px;width:300px;text-align:center;">2021</div>
<div class="t" style="top:774.02px;font-size:17.2px;font-weight:400;color:#000;letter-spacing:1.5px;left:717.75px;width:300px;text-align:center;">Preto</div>
<div class="t" style="top:774.02px;font-size:17.2px;font-weight:400;color:#000;letter-spacing:1.535px;left:957.74px;width:200px;text-align:right;">68.000</div>
<div class="t" style="top:774.02px;font-size:17.2px;font-weight:400;color:#000;letter-spacing:-0.6px;left:1152.60px;width:200px;text-align:right;">81.791</div>
<div class="t" style="top:774.02px;font-size:17.2px;font-weight:400;color:#000;letter-spacing:0.848px;left:1336.05px;width:200px;text-align:right;">4.667</div>
<div class="t" style="top:774.02px;font-size:17.2px;font-weight:400;color:#000;letter-spacing:1.188px;left:1481.09px;width:300px;text-align:center;">Terceiro</div>
<div class="r" style="left:326px;top:829px;width:1476px;height:1px;background:#000;"></div>
<div class="t" style="top:805.02px;font-size:17.2px;font-weight:400;color:#000;letter-spacing:-0.6px;left:202.70px;width:300px;text-align:center;">13</div>
<div class="t" style="top:805.02px;font-size:17.2px;font-weight:400;color:#000;letter-spacing:0.758px;left:288.38px;width:300px;text-align:center;">placa013</div>
<div class="t" style="top:805.02px;font-size:17.2px;font-weight:400;color:#000;letter-spacing:1.494px;left:427.25px;width:300px;text-align:center;">Montana</div>
<div class="t" style="top:805.02px;font-size:17.2px;font-weight:400;color:#000;letter-spacing:1.527px;left:583.76px;width:300px;text-align:center;">2020</div>
<div class="t" style="top:805.02px;font-size:17.2px;font-weight:400;color:#000;letter-spacing:1.523px;left:717.76px;width:300px;text-align:center;">Branco</div>
<div class="t" style="top:805.02px;font-size:17.2px;font-weight:400;color:#000;letter-spacing:1.682px;left:957.88px;width:200px;text-align:right;">40.000</div>
<div class="t" style="top:805.02px;font-size:17.2px;font-weight:400;color:#000;letter-spacing:-0.42px;left:1152.78px;width:200px;text-align:right;">53.212</div>
<div class="t" style="top:805.02px;font-size:17.2px;font-weight:400;color:#000;letter-spacing:0.545px;left:1335.75px;width:200px;text-align:right;">12.000</div>
<div class="t" style="top:805.02px;font-size:17.2px;font-weight:400;color:#000;letter-spacing:1.188px;left:1481.09px;width:300px;text-align:center;">Terceiro</div>
<div class="r" style="left:326px;top:860px;width:1476px;height:1px;background:#000;"></div>
<div class="t" style="top:836.02px;font-size:17.2px;font-weight:400;color:#000;letter-spacing:-0.6px;left:202.70px;width:300px;text-align:center;">14</div>
<div class="t" style="top:836.02px;font-size:17.2px;font-weight:400;color:#000;letter-spacing:0.897px;left:288.45px;width:300px;text-align:center;">placa014</div>
<div class="t" style="top:836.02px;font-size:17.2px;font-weight:400;color:#000;letter-spacing:1.498px;left:427.25px;width:300px;text-align:center;">Kangoo Van</div>
<div class="t" style="top:836.02px;font-size:17.2px;font-weight:400;color:#000;letter-spacing:-0.138px;left:582.93px;width:300px;text-align:center;">2021</div>
<div class="t" style="top:836.02px;font-size:17.2px;font-weight:400;color:#000;letter-spacing:1.131px;left:717.57px;width:300px;text-align:center;">Prata</div>
<div class="t" style="top:836.02px;font-size:17.2px;font-weight:400;color:#000;letter-spacing:1.227px;left:957.43px;width:200px;text-align:right;">50.500</div>
<div class="t" style="top:836.02px;font-size:17.2px;font-weight:400;color:#000;letter-spacing:0.23px;left:1153.43px;width:200px;text-align:right;">64.817</div>
<div class="t" style="top:836.02px;font-size:17.2px;font-weight:400;color:#000;letter-spacing:1.57px;left:1336.77px;width:200px;text-align:right;">4.000</div>
<div class="t" style="top:836.02px;font-size:17.2px;font-weight:400;color:#000;letter-spacing:1.419px;left:1481.21px;width:300px;text-align:center;">Próprio</div>
<div class="r" style="left:326px;top:891px;width:1476px;height:1px;background:#000;"></div>
<div class="t" style="top:867.02px;font-size:17.2px;font-weight:400;color:#000;letter-spacing:-0.6px;left:202.70px;width:300px;text-align:center;">15</div>
<div class="t" style="top:867.02px;font-size:17.2px;font-weight:400;color:#000;letter-spacing:0.758px;left:288.38px;width:300px;text-align:center;">placa015</div>
<div class="t" style="top:867.02px;font-size:17.2px;font-weight:400;color:#000;letter-spacing:1.126px;left:427.06px;width:300px;text-align:center;">Hyundai HR</div>
<div class="t" style="top:867.02px;font-size:17.2px;font-weight:400;color:#000;letter-spacing:-0.138px;left:582.93px;width:300px;text-align:center;">2021</div>
<div class="t" style="top:867.02px;font-size:17.2px;font-weight:400;color:#000;letter-spacing:1.131px;left:717.57px;width:300px;text-align:center;">Prata</div>
<div class="t" style="top:867.02px;font-size:17.2px;font-weight:400;color:#000;letter-spacing:1.227px;left:957.43px;width:200px;text-align:right;">50.500</div>
<div class="t" style="top:867.02px;font-size:17.2px;font-weight:400;color:#000;letter-spacing:0.772px;left:1153.97px;width:200px;text-align:right;">63.995</div>
<div class="t" style="top:867.02px;font-size:17.2px;font-weight:400;color:#000;letter-spacing:0.869px;left:1336.07px;width:200px;text-align:right;">10.000</div>
<div class="t" style="top:867.02px;font-size:17.2px;font-weight:400;color:#000;letter-spacing:1.188px;left:1481.09px;width:300px;text-align:center;">Terceiro</div>
<div class="r" style="left:326px;top:917px;width:1476px;height:1px;background:#000;"></div>
<div class="t" style="top:896.02px;font-size:17.2px;font-weight:400;color:#000;letter-spacing:-0.6px;left:202.70px;width:300px;text-align:center;">16</div>
<div class="t" style="top:896.02px;font-size:17.2px;font-weight:400;color:#000;letter-spacing:0.836px;left:288.42px;width:300px;text-align:center;">placa016</div>
<div class="t" style="top:896.02px;font-size:17.2px;font-weight:400;color:#000;letter-spacing:0.79px;left:426.89px;width:300px;text-align:center;">Scania P320</div>
<div class="t" style="top:896.02px;font-size:17.2px;font-weight:400;color:#000;letter-spacing:-0.138px;left:582.93px;width:300px;text-align:center;">2021</div>
<div class="t" style="top:896.02px;font-size:17.2px;font-weight:400;color:#000;letter-spacing:1.523px;left:717.76px;width:300px;text-align:center;">Branco</div>
<div class="t" style="top:896.02px;font-size:17.2px;font-weight:400;color:#000;letter-spacing:0.952px;left:957.15px;width:200px;text-align:right;">57.500</div>
<div class="t" style="top:896.02px;font-size:17.2px;font-weight:400;color:#000;letter-spacing:0.174px;left:1153.37px;width:200px;text-align:right;">71.499</div>
<div class="t" style="top:896.02px;font-size:17.2px;font-weight:400;color:#000;letter-spacing:0.806px;left:1336.01px;width:200px;text-align:right;">6.667</div>
<div class="t" style="top:896.02px;font-size:17.2px;font-weight:400;color:#000;letter-spacing:1.188px;left:1481.09px;width:300px;text-align:center;">Terceiro</div>
<div class="r" style="left:326px;top:943px;width:1476px;height:1px;background:#000;"></div>
<div class="t" style="top:922.02px;font-size:17.2px;font-weight:400;color:#000;letter-spacing:-0.6px;left:202.70px;width:300px;text-align:center;">17</div>
<div class="t" style="top:922.02px;font-size:17.2px;font-weight:400;color:#000;letter-spacing:0.773px;left:288.39px;width:300px;text-align:center;">placa017</div>
<div class="t" style="top:922.02px;font-size:17.2px;font-weight:400;color:#000;letter-spacing:0.922px;left:426.96px;width:300px;text-align:center;">Volvo VM 270</div>
<div class="t" style="top:922.02px;font-size:17.2px;font-weight:400;color:#000;letter-spacing:-0.138px;left:582.93px;width:300px;text-align:center;">2021</div>
<div class="t" style="top:922.02px;font-size:17.2px;font-weight:400;color:#000;letter-spacing:1.131px;left:717.57px;width:300px;text-align:center;">Prata</div>
<div class="t" style="top:922.02px;font-size:17.2px;font-weight:400;color:#000;letter-spacing:0.772px;left:956.97px;width:200px;text-align:right;">62.750</div>
<div class="t" style="top:922.02px;font-size:17.2px;font-weight:400;color:#000;letter-spacing:0.962px;left:1154.16px;width:200px;text-align:right;">74.770</div>
<div class="t" style="top:922.02px;font-size:17.2px;font-weight:400;color:#000;letter-spacing:0.626px;left:1335.83px;width:200px;text-align:right;">5.667</div>
<div class="t" style="top:922.02px;font-size:17.2px;font-weight:400;color:#000;letter-spacing:1.419px;left:1481.21px;width:300px;text-align:center;">Próprio</div>
<div class="r" style="left:326px;top:969px;width:1476px;height:1px;background:#000;"></div>
<div class="t" style="top:948.02px;font-size:17.2px;font-weight:400;color:#000;letter-spacing:-0.6px;left:202.70px;width:300px;text-align:center;">18</div>
<div class="t" style="top:948.02px;font-size:17.2px;font-weight:400;color:#000;letter-spacing:0.876px;left:288.44px;width:300px;text-align:center;">placa018</div>
<div class="t" style="top:948.02px;font-size:17.2px;font-weight:400;color:#000;letter-spacing:1.147px;left:427.07px;width:300px;text-align:center;">Kia Bongo K2500</div>
<div class="t" style="top:948.02px;font-size:17.2px;font-weight:400;color:#000;letter-spacing:-0.138px;left:582.93px;width:300px;text-align:center;">2021</div>
<div class="t" style="top:948.02px;font-size:17.2px;font-weight:400;color:#000;letter-spacing:1.5px;left:717.75px;width:300px;text-align:center;">Preto</div>
<div class="t" style="top:948.02px;font-size:17.2px;font-weight:400;color:#000;letter-spacing:1.535px;left:957.74px;width:200px;text-align:right;">68.000</div>
<div class="t" style="top:948.02px;font-size:17.2px;font-weight:400;color:#000;letter-spacing:-0.226px;left:1152.97px;width:200px;text-align:right;">83.213</div>
<div class="t" style="top:948.02px;font-size:17.2px;font-weight:400;color:#000;letter-spacing:0.848px;left:1336.05px;width:200px;text-align:right;">4.667</div>
<div class="t" style="top:948.02px;font-size:17.2px;font-weight:400;color:#000;letter-spacing:1.188px;left:1481.09px;width:300px;text-align:center;">Terceiro</div>
<div class="r" style="left:380px;top:426px;width:1px;height:527px;background:#000;"></div>
<div class="r" style="left:496px;top:426px;width:1px;height:527px;background:#000;"></div>
<div class="r" style="left:657px;top:426px;width:1px;height:527px;background:#000;"></div>
<div class="r" style="left:809px;top:426px;width:1px;height:527px;background:#000;"></div>
<div class="r" style="left:925px;top:426px;width:1px;height:527px;background:#000;"></div>
<div class="r" style="left:1164px;top:426px;width:1px;height:527px;background:#000;"></div>
<div class="r" style="left:1361px;top:426px;width:1px;height:527px;background:#000;"></div>
<div class="r" style="left:1543px;top:426px;width:1px;height:527px;background:#000;"></div>
<div class="r" style="left:1718px;top:426px;width:1px;height:527px;background:#000;"></div>
<div class="r" style="left:1801px;top:426px;width:1px;height:527px;background:#000;"></div>
</div>
<div class="r" style="left:326px;top:270px;width:1px;height:683px;background:#9E9E9E;"></div>
<div class="r" style="left:0px;top:426px;width:1894px;height:1px;background:#9E9E9E;"></div>
<div class="r" style="left:35px;top:294px;width:91px;height:77px;background:transparent;border:2px solid #107C41;box-sizing:border-box;"></div>
<div class="r" style="left:37px;top:296px;width:87px;height:73px;background:transparent;border:1px solid #fff;box-sizing:border-box;"></div>
<div class="r" style="left:121px;top:365px;width:6px;height:6px;background:#fff;"></div>
<div class="r" style="left:122px;top:366px;width:5px;height:5px;background:#107C41;"></div>
<div class="r" style="left:1894px;top:270px;width:26px;height:683px;background:#F0F0F0;border-radius:0;"></div>
<div class="r" style="left:1896px;top:270px;width:24px;height:687px;background:#F7F7F7;border-radius:10px;"></div>
<svg class="r" style="left:1901px;top:276px;" width="13" height="9" viewBox="0 0 13 9"><path d="M6.5 1 L12 8 H1 Z" fill="#707070" stroke="#707070" stroke-linejoin="round"/></svg>
<div class="r" style="left:1902px;top:291px;width:11px;height:327px;background:#707070;border-radius:6px;"></div>
<svg class="r" style="left:1901px;top:938px;" width="13" height="9" viewBox="0 0 13 9"><path d="M6.5 8 L12 1 H1 Z" fill="#707070" stroke="#707070" stroke-linejoin="round"/></svg>
<div class="r" style="left:240px;top:953px;width:110px;height:8px;background:#fff;"></div>
<div class="r" style="left:0px;top:953px;width:252px;height:40px;background:#E4EAE7;border-top-right-radius:7px;"></div>
<div class="r" style="left:340px;top:953px;width:1580px;height:40px;background:linear-gradient(90deg,#E3E9E6 0px,#E6E7E6 500px,#E6E7E6 1100px,#E3E9E6 1580px);border-top-left-radius:7px;"></div>
<svg class="r" style="left:30px;top:963px;" width="10" height="17" viewBox="0 0 10 17"><path d="M8 1.5 L2 8.5 L8 15.5" fill="none" stroke="#8a8a8a" stroke-width="1.3"/></svg>
<svg class="r" style="left:71px;top:963px;" width="10" height="17" viewBox="0 0 10 17"><path d="M2 1.5 L8 8.5 L2 15.5" fill="none" stroke="#8a8a8a" stroke-width="1.3"/></svg>
<div class="r" style="left:252px;top:953px;width:88px;height:35px;background:#fff;border-radius:0 0 7px 7px;box-shadow:0 1px 1px rgba(0,0,0,0.06);"></div>
<div class="t" style="top:967.02px;font-size:16.6px;font-weight:400;color:#242424;letter-spacing:0.127px;left:152.67px;">Cadastros</div>
<div class="r" style="left:246px;top:961px;width:1px;height:24px;background:#CFCFCF;"></div>
<div class="t" style="top:964.02px;font-size:16.9px;font-weight:700;color:#242424;letter-spacing:0.021px;left:262.42px;">Veículos</div>
<div class="r" style="left:262px;top:983px;width:68px;height:2px;background:#107C41;"></div>
<div class="r" style="left:345px;top:961px;width:1px;height:24px;background:#CFCFCF;"></div>
<div class="t" style="top:967.02px;font-size:16.6px;font-weight:400;color:#242424;letter-spacing:0.021px;left:362.17px;">Rotas</div>
<div class="r" style="left:422px;top:961px;width:1px;height:24px;background:#CFCFCF;"></div>
<div class="t" style="top:967.02px;font-size:16.6px;font-weight:400;color:#242424;letter-spacing:0.679px;left:442.17px;">Manutenção</div>
<div class="r" style="left:556px;top:961px;width:1px;height:24px;background:#CFCFCF;"></div>
<div class="t" style="top:967.02px;font-size:16.6px;font-weight:400;color:#242424;letter-spacing:0.689px;left:573.67px;">Documentos</div>
<div class="r" style="left:691px;top:961px;width:1px;height:24px;background:#CFCFCF;"></div>
<svg class="r" style="left:743px;top:964px;" width="16" height="16" viewBox="0 0 16 16"><path d="M8 1 V15 M1 8 H15" stroke="#424242" stroke-width="1.4"/></svg>
<svg class="r" style="left:920px;top:966px;" width="6" height="16" viewBox="0 0 6 16"><rect x="1.5" y="0.5" width="2.6" height="2.6" fill="#303030"/><rect x="1.5" y="6" width="2.6" height="2.6" fill="#303030"/><rect x="1.5" y="11.5" width="2.6" height="2.6" fill="#303030"/></svg>
<div class="r" style="left:943px;top:962px;width:952px;height:21px;background:#F3F3F3;border-radius:10px;"></div>
<svg class="r" style="left:948px;top:965px;" width="12" height="13" viewBox="0 0 12 13"><path d="M10 1.5 L2.5 6.5 L10 11.5 Z" fill="#707070" stroke="#707070" stroke-linejoin="round"/></svg>
<div class="r" style="left:964px;top:967px;width:617px;height:11px;background:#707070;border-radius:6px;"></div>
<svg class="r" style="left:1878px;top:965px;" width="12" height="13" viewBox="0 0 12 13"><path d="M2 1.5 L9.5 6.5 L2 11.5 Z" fill="#707070" stroke="#707070" stroke-linejoin="round"/></svg>
<div class="r" style="left:0px;top:993px;width:1920px;height:26px;background:#F3F3F3;"></div>
<div class="t" style="top:999.99px;font-size:13.1px;font-weight:400;color:#242424;left:14.00px;">Pronto</div>
<svg class="r" style="left:78px;top:998px;" width="20" height="18" viewBox="0 0 20 18"><rect x="1.2" y="1.2" width="15" height="12" fill="none" stroke="#3a3a3a" stroke-width="1.4"/><path d="M1.2 4.3 H16.2 M3.5 7.5 H7.5 M3.5 10.3 H6.5" stroke="#3a3a3a" stroke-width="1.2"/><circle cx="13.5" cy="12.8" r="4.6" fill="#F3F3F3" stroke="#3a3a3a" stroke-width="1.4"/><circle cx="13.5" cy="12.8" r="2" fill="#3a3a3a"/></svg>
<svg class="r" style="left:119px;top:997px;" width="19" height="20" viewBox="0 0 19 20"><circle cx="8" cy="3.2" r="2.2" fill="none" stroke="#3a3a3a" stroke-width="1.2"/><path d="M1.2 5.8 Q4.5 9 6.5 9 L6.2 12.5 Q5 15 3.5 18.5 M14.8 5.8 Q11.5 9 9.5 9 L9.7 11.5" fill="none" stroke="#3a3a3a" stroke-width="1.2" stroke-linejoin="round" stroke-linecap="round"/><path d="M11 12.8 L17.8 19 M17.8 12.8 L11 19" stroke="#3a3a3a" stroke-width="1.2"/></svg>
<div class="t" style="top:1001.99px;font-size:12.8px;font-weight:700;color:#242424;letter-spacing:-0.038px;left:141.18px;">Acessibilidade: investigar</div>
<svg class="r" style="left:1381px;top:997px;" width="19" height="18" viewBox="0 0 19 18"><rect x="1" y="1.5" width="16" height="11" fill="none" stroke="#424242" stroke-width="1.1"/><path d="M5 15.5 H9" stroke="#424242" stroke-width="1.1"/><circle cx="13" cy="13" r="3.5" fill="#F3F3F3" stroke="#424242" stroke-width="1.2"/></svg>
<div class="t" style="top:1001.02px;font-size:13px;font-weight:400;color:#242424;letter-spacing:0.03px;left:1401.46px;">Exibir Configurações</div>
<div class="r" style="left:1547px;top:994px;width:49px;height:25px;background:#E1E1E1;"></div>
<svg class="r" style="left:1562px;top:997px;" width="19" height="18" viewBox="0 0 19 18"><rect x="1" y="1" width="17" height="16" fill="none" stroke="#424242" stroke-width="1.1"/><path d="M1 6.3 H18 M1 11.6 H18 M6.6 1 V17 M12.3 1 V17" stroke="#424242" stroke-width="1"/></svg>
<svg class="r" style="left:1612px;top:997px;" width="19" height="18" viewBox="0 0 19 18"><rect x="1" y="1" width="17" height="16" fill="none" stroke="#424242" stroke-width="1.1"/><rect x="4" y="4" width="11" height="10" fill="none" stroke="#424242" stroke-width="1"/><path d="M6 7 H13 M6 9.5 H13 M6 12 H13" stroke="#424242" stroke-width="0.8"/></svg>
<svg class="r" style="left:1662px;top:997px;" width="19" height="18" viewBox="0 0 19 18"><path d="M1 1 H18 V17 H1 Z M6.5 1 V8.5 H18" fill="none" stroke="#424242" stroke-width="1.1"/></svg>
<div class="r" style="left:1704px;top:1006px;width:10px;height:1px;background:#424242;"></div>
<div class="r" style="left:1720px;top:1006px;width:125px;height:1px;background:#8a8a8a;"></div>
<div class="r" style="left:1782px;top:999px;width:5px;height:15px;background:#424242;border-radius:1px;"></div>
<svg class="r" style="left:1849px;top:1000px;" width="12" height="12" viewBox="0 0 12 12"><path d="M6 0.5 V11.5 M0.5 6 H11.5" stroke="#424242" stroke-width="1"/></svg>
<div class="t" style="top:1002.01px;font-size:12.6px;font-weight:400;color:#242424;left:1876.50px;">110%</div>
</body></html>
